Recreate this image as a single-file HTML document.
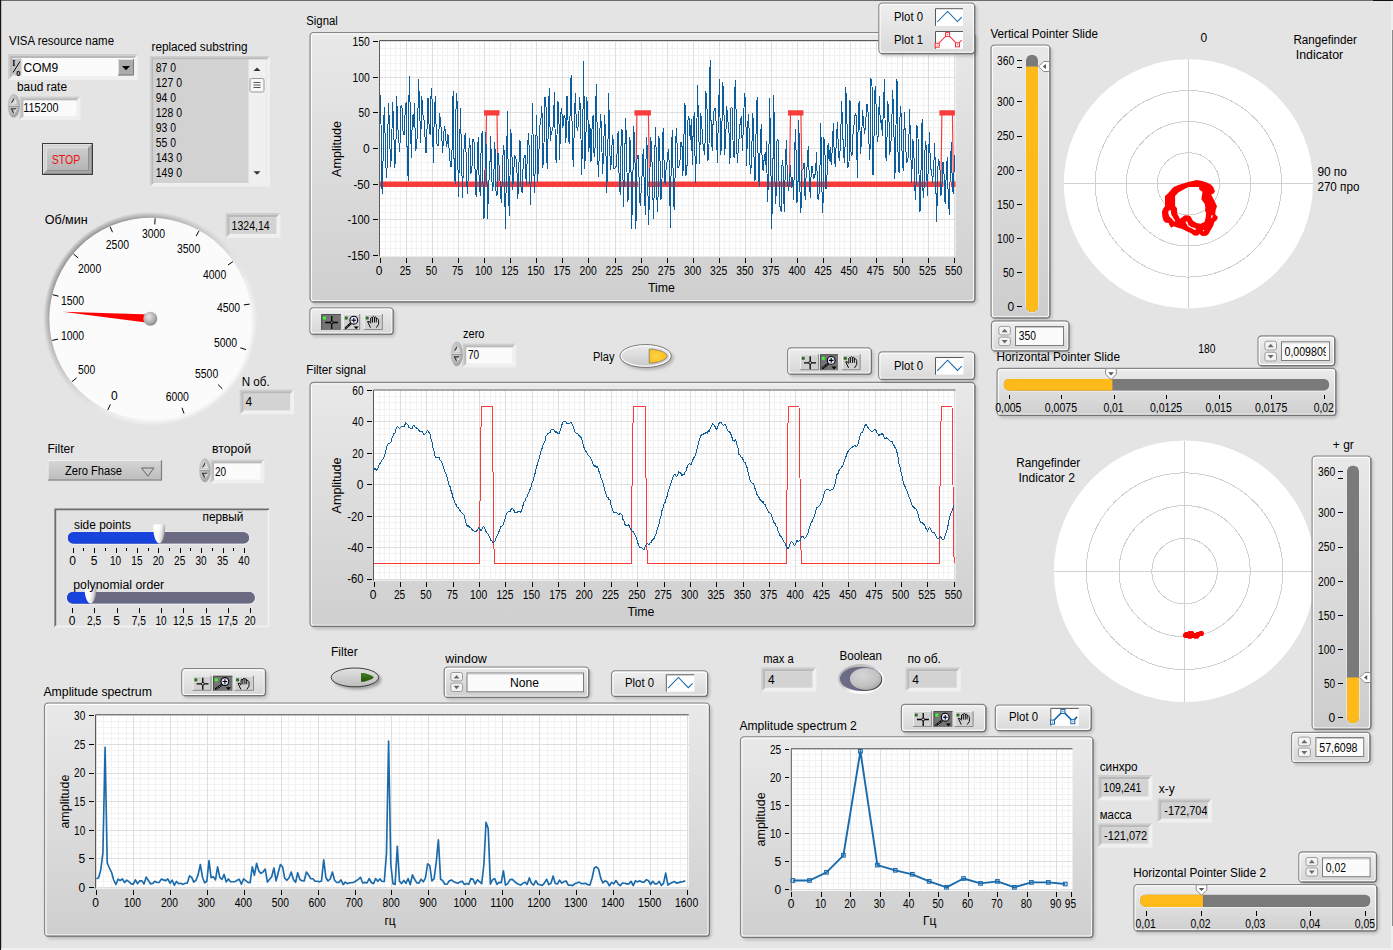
<!DOCTYPE html>
<html><head><meta charset="utf-8"><title>Front Panel</title>
<style>
html,body{margin:0;padding:0;background:#e4e4e4;overflow:hidden}
svg{display:block;font-family:"Liberation Sans",sans-serif;font-size:12px}

</style></head><body>
<svg width="1393" height="950" viewBox="0 0 1393 950">
<defs>
<filter id="blur" x="-5%" y="-5%" width="110%" height="115%"><feGaussianBlur stdDeviation="1.6"/></filter>
<radialGradient id="idc" cx=".38" cy=".36" r=".75"><stop offset="0" stop-color="#d4d4d4"/><stop offset=".55" stop-color="#bcbcbc"/><stop offset=".85" stop-color="#a2a2a2"/><stop offset="1" stop-color="#c8c8c8"/></radialGradient>
<linearGradient id="stopg" x1="0" y1="0" x2="0" y2="1"><stop offset="0" stop-color="#cdcdcd"/><stop offset="1" stop-color="#b4b4b4"/></linearGradient>
<linearGradient id="ringg" x1="0" y1="0" x2="0" y2="1"><stop offset="0" stop-color="#d6d6d6"/><stop offset="1" stop-color="#bcbcbc"/></linearGradient>
<linearGradient id="thumbg" x1="0" y1="0" x2="1" y2=".25"><stop offset="0" stop-color="#ffffff"/><stop offset=".55" stop-color="#fbfbfb"/><stop offset=".8" stop-color="#dcdcdc"/><stop offset="1" stop-color="#9e9e9e"/></linearGradient>
<linearGradient id="gring" x1=".15" y1=".15" x2=".85" y2=".85"><stop offset="0" stop-color="#8c8c8c"/><stop offset=".45" stop-color="#cfcfcf"/><stop offset=".7" stop-color="#f0f0f0"/><stop offset="1" stop-color="#ffffff"/></linearGradient>
<radialGradient id="gfade" cx=".5" cy=".5" r=".5"><stop offset=".935" stop-color="#e4e4e4" stop-opacity="0"/><stop offset=".992" stop-color="#e4e4e4" stop-opacity="1"/></radialGradient>
<radialGradient id="hub" cx=".4" cy=".35" r=".7"><stop offset="0" stop-color="#e6e6e6"/><stop offset=".6" stop-color="#b0b0b0"/><stop offset="1" stop-color="#808080"/></radialGradient>
<radialGradient id="knob" cx=".4" cy=".35" r=".8"><stop offset="0" stop-color="#d6d6d6"/><stop offset=".6" stop-color="#c2c2c2"/><stop offset="1" stop-color="#9a9a9a"/></radialGradient>
<linearGradient id="bring" x1="0" y1="0" x2="1" y2="1"><stop offset="0" stop-color="#a8a8a8"/><stop offset=".45" stop-color="#cfcfcf"/><stop offset=".6" stop-color="#fbfbfb"/><stop offset="1" stop-color="#ffffff"/></linearGradient>
<radialGradient id="yel" cx=".4" cy=".5" r=".6"><stop offset="0" stop-color="#ffd24a"/><stop offset="1" stop-color="#fbbd17"/></radialGradient>
<linearGradient id="grn" x1="0" y1="0" x2="0" y2="1"><stop offset="0" stop-color="#3f7f22"/><stop offset="1" stop-color="#245408"/></linearGradient>
<linearGradient id="playg2" x1="0" y1="0" x2="0" y2="1"><stop offset="0" stop-color="#e2e2e2"/><stop offset="1" stop-color="#bdbdbd"/></linearGradient>
<linearGradient id="playg" x1="0" y1="0" x2="0" y2="1"><stop offset="0" stop-color="#ececec"/><stop offset="1" stop-color="#c9c9c9"/></linearGradient>
<clipPath id="c0"><rect x="67.7" y="532.0" width="181.6" height="11.8" rx="5.9"/></clipPath>
<clipPath id="c1"><rect x="67.0" y="591.8" width="188.0" height="12.0" rx="6.0"/></clipPath>
<linearGradient id="g2" x1="0" y1="0" x2="0" y2="1"><stop offset="0" stop-color="#e9e9e9"/><stop offset="1" stop-color="#cfcfcf"/></linearGradient>
<clipPath id="cs1"><rect x="380" y="41" width="575.5" height="215.5"/></clipPath>
<linearGradient id="g4" x1="0" y1="0" x2="0" y2="1"><stop offset="0" stop-color="#efefef"/><stop offset="1" stop-color="#d9d9d9"/></linearGradient>
<linearGradient id="g5" x1="0" y1="0" x2="0" y2="1"><stop offset="0" stop-color="#ededed"/><stop offset="1" stop-color="#d6d6d6"/></linearGradient>
<linearGradient id="g6" x1="0" y1="0" x2="0" y2="1"><stop offset="0" stop-color="#e9e9e9"/><stop offset="1" stop-color="#cfcfcf"/></linearGradient>
<clipPath id="cs2"><rect x="374" y="390.5" width="581.5" height="190"/></clipPath>
<linearGradient id="g8" x1="0" y1="0" x2="0" y2="1"><stop offset="0" stop-color="#ededed"/><stop offset="1" stop-color="#d6d6d6"/></linearGradient>
<linearGradient id="g9" x1="0" y1="0" x2="0" y2="1"><stop offset="0" stop-color="#efefef"/><stop offset="1" stop-color="#d9d9d9"/></linearGradient>
<linearGradient id="g10" x1="0" y1="0" x2="0" y2="1"><stop offset="0" stop-color="#e8e8e8"/><stop offset="1" stop-color="#cdcdcd"/></linearGradient>
<clipPath id="c11"><rect x="1026.0" y="54.8" width="12.0" height="257.4" rx="6.0"/></clipPath>
<linearGradient id="g12" x1="0" y1="0" x2="0" y2="1"><stop offset="0" stop-color="#efefef"/><stop offset="1" stop-color="#d6d6d6"/></linearGradient>
<linearGradient id="g13" x1="0" y1="0" x2="0" y2="1"><stop offset="0" stop-color="#efefef"/><stop offset="1" stop-color="#d6d6d6"/></linearGradient>
<clipPath id="c14"><rect x="1282.0" y="342.3" width="43.8" height="17.7"/></clipPath>
<linearGradient id="g15" x1="0" y1="0" x2="0" y2="1"><stop offset="0" stop-color="#ececec"/><stop offset="1" stop-color="#cfcfcf"/></linearGradient>
<clipPath id="c16"><rect x="1003.5" y="378.8" width="325.9" height="12.0" rx="6.0"/></clipPath>
<linearGradient id="g17" x1="0" y1="0" x2="0" y2="1"><stop offset="0" stop-color="#e8e8e8"/><stop offset="1" stop-color="#cdcdcd"/></linearGradient>
<clipPath id="c18"><rect x="1347.0" y="465.4" width="12.0" height="258.0" rx="6.0"/></clipPath>
<linearGradient id="g19" x1="0" y1="0" x2="0" y2="1"><stop offset="0" stop-color="#efefef"/><stop offset="1" stop-color="#d6d6d6"/></linearGradient>
<clipPath id="c20"><rect x="1161.3" y="802.0" width="45.8" height="17.2"/></clipPath>
<clipPath id="c21"><rect x="1101.5" y="826.7" width="46.0" height="17.5"/></clipPath>
<linearGradient id="g22" x1="0" y1="0" x2="0" y2="1"><stop offset="0" stop-color="#efefef"/><stop offset="1" stop-color="#d6d6d6"/></linearGradient>
<linearGradient id="g23" x1="0" y1="0" x2="0" y2="1"><stop offset="0" stop-color="#ececec"/><stop offset="1" stop-color="#cfcfcf"/></linearGradient>
<clipPath id="c24"><rect x="1140.0" y="894.5" width="230.6" height="12.5" rx="6.2"/></clipPath>
<linearGradient id="g25" x1="0" y1="0" x2="0" y2="1"><stop offset="0" stop-color="#e9e9e9"/><stop offset="1" stop-color="#cfcfcf"/></linearGradient>
<linearGradient id="g26" x1="0" y1="0" x2="0" y2="1"><stop offset="0" stop-color="#efefef"/><stop offset="1" stop-color="#d9d9d9"/></linearGradient>
<linearGradient id="g27" x1="0" y1="0" x2="0" y2="1"><stop offset="0" stop-color="#ededed"/><stop offset="1" stop-color="#d6d6d6"/></linearGradient>
<linearGradient id="g28" x1="0" y1="0" x2="0" y2="1"><stop offset="0" stop-color="#e9e9e9"/><stop offset="1" stop-color="#cfcfcf"/></linearGradient>
<clipPath id="cs3"><rect x="96" y="715" width="592.8" height="173.6"/></clipPath>
<linearGradient id="g30" x1="0" y1="0" x2="0" y2="1"><stop offset="0" stop-color="#ededed"/><stop offset="1" stop-color="#d6d6d6"/></linearGradient>
<linearGradient id="g31" x1="0" y1="0" x2="0" y2="1"><stop offset="0" stop-color="#efefef"/><stop offset="1" stop-color="#d9d9d9"/></linearGradient>
<linearGradient id="g32" x1="0" y1="0" x2="0" y2="1"><stop offset="0" stop-color="#e9e9e9"/><stop offset="1" stop-color="#cfcfcf"/></linearGradient></defs>
<rect x="0" y="0" width="1393" height="950" fill="#e4e4e4"/>
<text x="9.0" y="45.0" textLength="105.0" lengthAdjust="spacingAndGlyphs">VISA resource name</text>
<rect x="8.0" y="54.0" width="130.0" height="26.0" fill="#f0f0f0"/>
<path d="M8.0 54.0H138.0L134.0 58.0H12.0V76.0L8.0 80.0Z" fill="#cecece"/>
<path d="M10.0 56.0H136.0L134.0 58.0H12.0V76.0L10.0 78.0Z" fill="#b9b9b9"/>
<rect x="12.0" y="58.0" width="122.0" height="18.0" fill="#fbfbfb"/>
<rect x="12" y="58.5" width="9.5" height="17" fill="#c4c4c4"/>
<text x="12.2" y="65.5" font-size="8" font-family="Liberation Serif,serif" font-weight="bold">I</text>
<path d="M13 72.5L20 61.5" stroke="#000" stroke-width="1"/>
<text x="16.3" y="75.5" font-size="7.5" font-weight="bold">0</text>
<text x="23.5" y="72.0">COM9</text>
<rect x="118" y="59" width="16" height="16.5" fill="#ababab"/>
<path d="M118.5 75.5V59.5H134" stroke="#e0e0e0" stroke-width="1" fill="none"/>
<path d="M118 75H133.5V59" stroke="#7b7b7b" stroke-width="1" fill="none"/>
<path d="M122 66h8l-4 4.2z" fill="#000"/>
<text x="17.0" y="91.0" textLength="50.0" lengthAdjust="spacingAndGlyphs">baud rate</text>
<rect x="19.5" y="96.5" width="60.9" height="23.4" fill="#f0f0f0"/>
<path d="M19.5 96.5H80.4L76.4 100.5H23.5V115.9L19.5 119.9Z" fill="#cecece"/>
<path d="M21.5 98.5H78.4L76.4 100.5H23.5V115.9L21.5 117.9Z" fill="#b9b9b9"/>
<rect x="23.5" y="100.5" width="52.9" height="15.4" fill="#fbfbfb"/>
<ellipse cx="13.8" cy="105.8" rx="6.1" ry="11.8" fill="url(#idc)"/>
<path d="M8.8 105.4H18.8" stroke="#e8e8e8" stroke-width=".9"/>
<path d="M8.8 106.3H18.8" stroke="#8a8a8a" stroke-width=".9"/>
<path d="M11.6 103.0L14.0 98.6" stroke="#333" stroke-width="1.1"/>
<path d="M14.4 99.0L16.4 103.0H12.2" fill="none" stroke="#f4f4f4" stroke-width=".9"/>
<path d="M16.2 108.8H11.4L13.6 113.0" fill="none" stroke="#333" stroke-width="1.1"/>
<path d="M14.3 112.8L16.4 109.2" stroke="#f4f4f4" stroke-width=".9"/>
<text x="23.2" y="112.0" textLength="35.2" lengthAdjust="spacingAndGlyphs">115200</text>
<rect x="42" y="143" width="51" height="32" fill="#3c3c3c"/>
<path d="M43 144H92V174H43Z" fill="#8e8e8e"/>
<path d="M43 144H92L88 148H47V170L43 174Z" fill="#e2e2e2"/>
<rect x="47" y="148" width="41" height="22" fill="url(#stopg)"/>
<rect x="45" y="146" width="45" height="26" fill="none" stroke="#c4c4c4" stroke-width="2" opacity=".45"/>
<text x="66.0" y="164.0" text-anchor="middle" textLength="28.5" lengthAdjust="spacingAndGlyphs" fill="#ee1111">STOP</text>
<text x="151.5" y="51.3" textLength="96.0" lengthAdjust="spacingAndGlyphs">replaced substring</text>
<rect x="150.0" y="56.0" width="120.0" height="130.5" fill="#f0f0f0"/>
<path d="M150.0 56.0H270.0L266.5 59.5H153.5V183.0L150.0 186.5Z" fill="#cecece"/>
<path d="M151.8 57.8H268.2L266.5 59.5H153.5V183.0L151.8 184.8Z" fill="#b9b9b9"/>
<rect x="153.5" y="59.5" width="113.0" height="123.5" fill="#d2d2d2"/>
<rect x="248.5" y="59.5" width="18" height="123.5" fill="#f0f0f0"/>
<path d="M253.5 71h7l-3.5 -3.6z" fill="#333"/>
<path d="M253.5 171.2h7l-3.5 3.6z" fill="#333"/>
<rect x="250" y="78.5" width="14" height="13.5" rx="1.5" fill="#f7f7f7" stroke="#9a9a9a" stroke-width="1"/>
<path d="M253.5 82.5h7M253.5 85h7M253.5 87.5h7" stroke="#555" stroke-width="1"/>
<text x="155.8" y="72.0" textLength="20.2" lengthAdjust="spacingAndGlyphs">87 0</text>
<text x="155.8" y="87.0" textLength="26.2" lengthAdjust="spacingAndGlyphs">127 0</text>
<text x="155.8" y="102.0" textLength="20.2" lengthAdjust="spacingAndGlyphs">94 0</text>
<text x="155.8" y="117.0" textLength="26.2" lengthAdjust="spacingAndGlyphs">128 0</text>
<text x="155.8" y="132.0" textLength="20.2" lengthAdjust="spacingAndGlyphs">93 0</text>
<text x="155.8" y="147.0" textLength="20.2" lengthAdjust="spacingAndGlyphs">55 0</text>
<text x="155.8" y="162.0" textLength="26.2" lengthAdjust="spacingAndGlyphs">143 0</text>
<text x="155.8" y="177.0" textLength="26.2" lengthAdjust="spacingAndGlyphs">149 0</text>
<text x="44.7" y="224.0" textLength="43.0" lengthAdjust="spacingAndGlyphs">Об/мин</text>
<circle cx="150.3" cy="318.8" r="107" fill="url(#gring)"/>
<circle cx="150.3" cy="318.8" r="108" fill="url(#gfade)"/>
<circle cx="150.3" cy="318.8" r="101" fill="#fbfbfb"/>
<path d="M107.8 409.9L110.4 404.4M71.9 381.7L76.6 377.9M52.2 340.4L58.0 339.1M52.7 294.7L58.5 296.2M73.5 254.0L78.1 257.9M110.1 226.7L112.5 232.2M155.1 218.4L154.8 224.4M199.0 230.9L196.1 236.1M232.9 261.6L228.0 265.0M249.7 304.1L243.8 304.9M246.0 349.6L240.3 347.8M222.4 388.8L218.1 384.6M184.0 413.5L182.0 407.8" stroke="#000" stroke-width="1"/>
<text x="114.4" y="400.2" text-anchor="middle">0</text>
<text x="86.6" y="374.2" text-anchor="middle" textLength="17.2" lengthAdjust="spacingAndGlyphs">500</text>
<text x="72.5" y="340.1" text-anchor="middle" textLength="23.2" lengthAdjust="spacingAndGlyphs">1000</text>
<text x="72.5" y="305.0" text-anchor="middle" textLength="23.2" lengthAdjust="spacingAndGlyphs">1500</text>
<text x="89.6" y="273.4" text-anchor="middle" textLength="23.2" lengthAdjust="spacingAndGlyphs">2000</text>
<text x="117.4" y="249.2" text-anchor="middle" textLength="23.2" lengthAdjust="spacingAndGlyphs">2500</text>
<text x="153.5" y="238.1" text-anchor="middle" textLength="23.2" lengthAdjust="spacingAndGlyphs">3000</text>
<text x="188.6" y="253.2" text-anchor="middle" textLength="23.2" lengthAdjust="spacingAndGlyphs">3500</text>
<text x="214.6" y="279.0" text-anchor="middle" textLength="23.2" lengthAdjust="spacingAndGlyphs">4000</text>
<text x="228.5" y="311.8" text-anchor="middle" textLength="23.2" lengthAdjust="spacingAndGlyphs">4500</text>
<text x="225.5" y="347.2" text-anchor="middle" textLength="23.2" lengthAdjust="spacingAndGlyphs">5000</text>
<text x="206.6" y="378.0" text-anchor="middle" textLength="23.2" lengthAdjust="spacingAndGlyphs">5500</text>
<text x="177.3" y="401.0" text-anchor="middle" textLength="23.2" lengthAdjust="spacingAndGlyphs">6000</text>
<path d="M62.6 311.7L150.6 314.6L150.0 323.0Z" fill="#ff0000"/>
<circle cx="150.3" cy="318.8" r="7" fill="url(#hub)"/>
<rect x="225.6" y="213.1" width="54.8" height="24.8" fill="#f0f0f0"/>
<path d="M225.6 213.1H280.4L276.4 217.1H229.6V233.9L225.6 237.9Z" fill="#cecece"/>
<path d="M227.6 215.1H278.4L276.4 217.1H229.6V233.9L227.6 235.9Z" fill="#b9b9b9"/>
<rect x="229.6" y="217.1" width="46.8" height="16.8" fill="#d3d3d3"/>
<text x="231.5" y="229.6" textLength="38.2" lengthAdjust="spacingAndGlyphs">1324,14</text>
<text x="241.7" y="385.7" textLength="28.0" lengthAdjust="spacingAndGlyphs">N об.</text>
<rect x="239.6" y="389.6" width="54.5" height="24.8" fill="#f0f0f0"/>
<path d="M239.6 389.6H294.1L290.1 393.6H243.6V410.4L239.6 414.4Z" fill="#cecece"/>
<path d="M241.6 391.6H292.1L290.1 393.6H243.6V410.4L241.6 412.4Z" fill="#b9b9b9"/>
<rect x="243.6" y="393.6" width="46.5" height="16.8" fill="#d3d3d3"/>
<text x="245.5" y="406.4">4</text>
<text x="47.5" y="452.8">Filter</text>
<rect x="47.5" y="459.8" width="114.5" height="20.8" fill="url(#ringg)"/>
<path d="M48 480.5V460.3H162" stroke="#f0f0f0" stroke-width="1.2" fill="none"/>
<path d="M48 480H161.5V460.3" stroke="#7e7e7e" stroke-width="1.2" fill="none"/>
<text x="93.5" y="474.8" text-anchor="middle" textLength="57.0" lengthAdjust="spacingAndGlyphs">Zero Fhase</text>
<path d="M141.5 468h12.5l-6.2 8.2z" fill="none" stroke="#666" stroke-width="1"/>
<text x="212.0" y="452.8" textLength="39.0" lengthAdjust="spacingAndGlyphs">второй</text>
<rect x="210.2" y="459.5" width="54.2" height="24.0" fill="#f0f0f0"/>
<path d="M210.2 459.5H264.4L260.4 463.5H214.2V479.5L210.2 483.5Z" fill="#cecece"/>
<path d="M212.2 461.5H262.4L260.4 463.5H214.2V479.5L212.2 481.5Z" fill="#b9b9b9"/>
<rect x="214.2" y="463.5" width="46.2" height="16.0" fill="#fbfbfb"/>
<ellipse cx="204.9" cy="470.2" rx="5.7" ry="12.0" fill="url(#idc)"/>
<path d="M200.3 469.8H209.5" stroke="#e8e8e8" stroke-width=".9"/>
<path d="M200.3 470.7H209.5" stroke="#8a8a8a" stroke-width=".9"/>
<path d="M202.7 467.4L205.1 463.0" stroke="#333" stroke-width="1.1"/>
<path d="M205.5 463.4L207.5 467.4H203.3" fill="none" stroke="#f4f4f4" stroke-width=".9"/>
<path d="M207.3 473.2H202.5L204.7 477.4" fill="none" stroke="#333" stroke-width="1.1"/>
<path d="M205.4 477.2L207.5 473.6" stroke="#f4f4f4" stroke-width=".9"/>
<text x="215.0" y="475.6" textLength="11.2" lengthAdjust="spacingAndGlyphs">20</text>
<rect x="54.5" y="508.5" width="214.5" height="118.5" fill="#e2e2e2"/>
<path d="M55.3 627V509.3H269" stroke="#6e6e6e" stroke-width="1.8" fill="none"/>
<path d="M55 626.5H268.5V510" stroke="#f3f3f3" stroke-width="1.4" fill="none"/>
<text x="202.5" y="520.5" textLength="41.0" lengthAdjust="spacingAndGlyphs">первый</text>
<rect x="67.1" y="531.6" width="183.0" height="13.2" rx="6.6" fill="#f0f0f4"/>
<g clip-path="url(#c0)"><rect x="67.7" y="532.0" width="181.6" height="11.8" fill="#6a6a82"/><rect x="67.7" y="532.0" width="91.5" height="11.8" fill="#1843dc"/></g>
<path d="M153.2 526.3Q153.2 524.3 155.2 524.3H163.2Q165.2 524.3 165.2 526.3C165.2 536.4 162.4 543.4 159.2 543.4C156.0 543.4 153.2 536.4 153.2 526.3Z" fill="url(#thumbg)"/>
<text x="74.0" y="528.5" textLength="57.0" lengthAdjust="spacingAndGlyphs">side points</text>
<path d="M73.2 548V553.3M83.9 548V551.0M94.6 548V553.3M105.3 548V551.0M116.0 548V553.3M126.7 548V551.0M137.4 548V553.3M148.1 548V551.0M158.8 548V553.3M169.5 548V551.0M180.2 548V553.3M190.9 548V551.0M201.6 548V553.3M212.3 548V551.0M223.0 548V553.3M233.7 548V551.0M244.4 548V553.3" stroke="#000" stroke-width="1" shape-rendering="crispEdges"/>
<text x="72.7" y="564.8" text-anchor="middle">0</text>
<text x="94.1" y="564.8" text-anchor="middle">5</text>
<text x="115.5" y="564.8" text-anchor="middle" textLength="11.2" lengthAdjust="spacingAndGlyphs">10</text>
<text x="136.9" y="564.8" text-anchor="middle" textLength="11.2" lengthAdjust="spacingAndGlyphs">15</text>
<text x="158.3" y="564.8" text-anchor="middle" textLength="11.2" lengthAdjust="spacingAndGlyphs">20</text>
<text x="179.7" y="564.8" text-anchor="middle" textLength="11.2" lengthAdjust="spacingAndGlyphs">25</text>
<text x="201.1" y="564.8" text-anchor="middle" textLength="11.2" lengthAdjust="spacingAndGlyphs">30</text>
<text x="222.5" y="564.8" text-anchor="middle" textLength="11.2" lengthAdjust="spacingAndGlyphs">35</text>
<text x="243.9" y="564.8" text-anchor="middle" textLength="11.2" lengthAdjust="spacingAndGlyphs">40</text>
<rect x="66.4" y="591.4" width="189.4" height="13.4" rx="6.7" fill="#f0f0f4"/>
<g clip-path="url(#c1)"><rect x="67.0" y="591.8" width="188.0" height="12.0" fill="#6a6a82"/><rect x="67.0" y="591.8" width="23.5" height="12.0" fill="#1843dc"/></g>
<path d="M84.5 587.4Q84.5 585.4 86.5 585.4H94.5Q96.5 585.4 96.5 587.4C96.5 596.4 93.7 603.4 90.5 603.4C87.3 603.4 84.5 596.4 84.5 587.4Z" fill="url(#thumbg)"/>
<text x="73.2" y="588.9" textLength="91.0" lengthAdjust="spacingAndGlyphs">polynomial order</text>
<path d="M72.5 608V613.3M94.8 608V613.3M117.0 608V613.3M139.2 608V613.3M161.5 608V613.3M183.8 608V613.3M206.0 608V613.3M228.2 608V613.3M250.5 608V613.3" stroke="#000" stroke-width="1" shape-rendering="crispEdges"/>
<text x="72.0" y="624.8" text-anchor="middle">0</text>
<text x="94.2" y="624.8" text-anchor="middle" textLength="14.2" lengthAdjust="spacingAndGlyphs">2,5</text>
<text x="116.5" y="624.8" text-anchor="middle">5</text>
<text x="138.8" y="624.8" text-anchor="middle" textLength="14.2" lengthAdjust="spacingAndGlyphs">7,5</text>
<text x="161.0" y="624.8" text-anchor="middle" textLength="11.2" lengthAdjust="spacingAndGlyphs">10</text>
<text x="183.2" y="624.8" text-anchor="middle" textLength="20.2" lengthAdjust="spacingAndGlyphs">12,5</text>
<text x="205.5" y="624.8" text-anchor="middle" textLength="11.2" lengthAdjust="spacingAndGlyphs">15</text>
<text x="227.8" y="624.8" text-anchor="middle" textLength="20.2" lengthAdjust="spacingAndGlyphs">17,5</text>
<text x="250.0" y="624.8" text-anchor="middle" textLength="11.2" lengthAdjust="spacingAndGlyphs">20</text>
<text x="306.3" y="24.5" textLength="31.5" lengthAdjust="spacingAndGlyphs">Signal</text>
<rect x="311.7" y="34.4" width="665.6" height="270.3" rx="4.5" fill="#000" opacity=".16" filter="url(#blur)"/>
<rect x="310.1" y="32.6" width="664.7" height="269.2" rx="3.5" fill="url(#g2)" stroke="#868686" stroke-width="1.3"/>
<rect x="311.4" y="33.9" width="662.3" height="266.8" rx="2.3" fill="none" stroke="#fff" stroke-width="1.1" opacity=".92"/>
<path d="M312.5 301.9H971.9Q974.9 301.9 974.9 298.9V35.0" fill="none" stroke="#6c6c6c" stroke-width="1.2" opacity=".75"/>
<rect x="379.0" y="40.0" width="576.5" height="216.5" fill="#fff"/>
<path d="M385.2 40.0V256.5M390.4 40.0V256.5M395.7 40.0V256.5M400.9 40.0V256.5M406.1 40.0V256.5M411.3 40.0V256.5M416.6 40.0V256.5M421.8 40.0V256.5M427.0 40.0V256.5M432.2 40.0V256.5M437.4 40.0V256.5M442.7 40.0V256.5M447.9 40.0V256.5M453.1 40.0V256.5M458.3 40.0V256.5M463.6 40.0V256.5M468.8 40.0V256.5M474.0 40.0V256.5M479.2 40.0V256.5M484.4 40.0V256.5M489.7 40.0V256.5M494.9 40.0V256.5M500.1 40.0V256.5M505.3 40.0V256.5M510.6 40.0V256.5M515.8 40.0V256.5M521.0 40.0V256.5M526.2 40.0V256.5M531.5 40.0V256.5M536.7 40.0V256.5M541.9 40.0V256.5M547.1 40.0V256.5M552.3 40.0V256.5M557.6 40.0V256.5M562.8 40.0V256.5M568.0 40.0V256.5M573.2 40.0V256.5M578.5 40.0V256.5M583.7 40.0V256.5M588.9 40.0V256.5M594.1 40.0V256.5M599.3 40.0V256.5M604.6 40.0V256.5M609.8 40.0V256.5M615.0 40.0V256.5M620.2 40.0V256.5M625.5 40.0V256.5M630.7 40.0V256.5M635.9 40.0V256.5M641.1 40.0V256.5M646.3 40.0V256.5M651.6 40.0V256.5M656.8 40.0V256.5M662.0 40.0V256.5M667.2 40.0V256.5M672.5 40.0V256.5M677.7 40.0V256.5M682.9 40.0V256.5M688.1 40.0V256.5M693.4 40.0V256.5M698.6 40.0V256.5M703.8 40.0V256.5M709.0 40.0V256.5M714.2 40.0V256.5M719.5 40.0V256.5M724.7 40.0V256.5M729.9 40.0V256.5M735.1 40.0V256.5M740.4 40.0V256.5M745.6 40.0V256.5M750.8 40.0V256.5M756.0 40.0V256.5M761.2 40.0V256.5M766.5 40.0V256.5M771.7 40.0V256.5M776.9 40.0V256.5M782.1 40.0V256.5M787.4 40.0V256.5M792.6 40.0V256.5M797.8 40.0V256.5M803.0 40.0V256.5M808.2 40.0V256.5M813.5 40.0V256.5M818.7 40.0V256.5M823.9 40.0V256.5M829.1 40.0V256.5M834.4 40.0V256.5M839.6 40.0V256.5M844.8 40.0V256.5M850.0 40.0V256.5M855.2 40.0V256.5M860.5 40.0V256.5M865.7 40.0V256.5M870.9 40.0V256.5M876.1 40.0V256.5M881.4 40.0V256.5M886.6 40.0V256.5M891.8 40.0V256.5M897.0 40.0V256.5M902.2 40.0V256.5M907.5 40.0V256.5M912.7 40.0V256.5M917.9 40.0V256.5M923.1 40.0V256.5M928.4 40.0V256.5M933.6 40.0V256.5M938.8 40.0V256.5M944.0 40.0V256.5M949.3 40.0V256.5M954.5 40.0V256.5M379.0 248.5H955.5M379.0 241.3H955.5M379.0 234.2H955.5M379.0 227.1H955.5M379.0 219.9H955.5M379.0 212.8H955.5M379.0 205.7H955.5M379.0 198.5H955.5M379.0 191.4H955.5M379.0 184.3H955.5M379.0 177.1H955.5M379.0 170.0H955.5M379.0 162.9H955.5M379.0 155.7H955.5M379.0 148.6H955.5M379.0 141.5H955.5M379.0 134.3H955.5M379.0 127.2H955.5M379.0 120.1H955.5M379.0 112.9H955.5M379.0 105.8H955.5M379.0 98.7H955.5M379.0 91.5H955.5M379.0 84.4H955.5M379.0 77.3H955.5M379.0 70.1H955.5M379.0 63.0H955.5M379.0 55.9H955.5M379.0 48.7H955.5M379.0 41.6H955.5" stroke="#f2f2f2" stroke-width="1" fill="none" shape-rendering="crispEdges"/>
<path d="M406.1 40.0V256.5M432.2 40.0V256.5M458.3 40.0V256.5M484.4 40.0V256.5M510.6 40.0V256.5M536.7 40.0V256.5M562.8 40.0V256.5M588.9 40.0V256.5M615.0 40.0V256.5M641.1 40.0V256.5M667.2 40.0V256.5M693.4 40.0V256.5M719.5 40.0V256.5M745.6 40.0V256.5M771.7 40.0V256.5M797.8 40.0V256.5M823.9 40.0V256.5M850.0 40.0V256.5M876.1 40.0V256.5M902.2 40.0V256.5M928.4 40.0V256.5M954.5 40.0V256.5M379.0 41.6H955.5M379.0 77.3H955.5M379.0 112.9H955.5M379.0 148.6H955.5M379.0 184.3H955.5M379.0 219.9H955.5" stroke="#dedede" stroke-width="1" fill="none" shape-rendering="crispEdges"/>
<path d="M379.5 256.5V40.5H955.5" stroke="#5a5a5a" stroke-width="1" fill="none"/>
<path d="M373.2 41.6H377.8M373.2 77.3H377.8M373.2 112.9H377.8M373.2 148.6H377.8M373.2 184.3H377.8M373.2 219.9H377.8M373.2 255.6H377.8M380.0 258.0V262.6M406.1 258.0V262.6M432.2 258.0V262.6M458.3 258.0V262.6M484.4 258.0V262.6M510.6 258.0V262.6M536.7 258.0V262.6M562.8 258.0V262.6M588.9 258.0V262.6M615.0 258.0V262.6M641.1 258.0V262.6M667.2 258.0V262.6M693.4 258.0V262.6M719.5 258.0V262.6M745.6 258.0V262.6M771.7 258.0V262.6M797.8 258.0V262.6M823.9 258.0V262.6M850.0 258.0V262.6M876.1 258.0V262.6M902.2 258.0V262.6M928.4 258.0V262.6M954.5 258.0V262.6" stroke="#000" stroke-width="1" fill="none" shape-rendering="crispEdges"/>
<text x="369.8" y="46.0" text-anchor="end" textLength="17.2" lengthAdjust="spacingAndGlyphs">150</text>
<text x="369.8" y="81.7" text-anchor="end" textLength="17.2" lengthAdjust="spacingAndGlyphs">100</text>
<text x="369.8" y="117.3" text-anchor="end" textLength="11.2" lengthAdjust="spacingAndGlyphs">50</text>
<text x="369.8" y="153.0" text-anchor="end">0</text>
<text x="369.8" y="188.7" text-anchor="end" textLength="16.2" lengthAdjust="spacingAndGlyphs">-50</text>
<text x="369.8" y="224.3" text-anchor="end" textLength="22.2" lengthAdjust="spacingAndGlyphs">-100</text>
<text x="369.8" y="260.0" text-anchor="end" textLength="22.2" lengthAdjust="spacingAndGlyphs">-150</text>
<text x="379.2" y="275.0" text-anchor="middle">0</text>
<text x="405.3" y="275.0" text-anchor="middle" textLength="11.2" lengthAdjust="spacingAndGlyphs">25</text>
<text x="431.4" y="275.0" text-anchor="middle" textLength="11.2" lengthAdjust="spacingAndGlyphs">50</text>
<text x="457.5" y="275.0" text-anchor="middle" textLength="11.2" lengthAdjust="spacingAndGlyphs">75</text>
<text x="483.6" y="275.0" text-anchor="middle" textLength="17.2" lengthAdjust="spacingAndGlyphs">100</text>
<text x="509.8" y="275.0" text-anchor="middle" textLength="17.2" lengthAdjust="spacingAndGlyphs">125</text>
<text x="535.9" y="275.0" text-anchor="middle" textLength="17.2" lengthAdjust="spacingAndGlyphs">150</text>
<text x="562.0" y="275.0" text-anchor="middle" textLength="17.2" lengthAdjust="spacingAndGlyphs">175</text>
<text x="588.1" y="275.0" text-anchor="middle" textLength="17.2" lengthAdjust="spacingAndGlyphs">200</text>
<text x="614.2" y="275.0" text-anchor="middle" textLength="17.2" lengthAdjust="spacingAndGlyphs">225</text>
<text x="640.3" y="275.0" text-anchor="middle" textLength="17.2" lengthAdjust="spacingAndGlyphs">250</text>
<text x="666.4" y="275.0" text-anchor="middle" textLength="17.2" lengthAdjust="spacingAndGlyphs">275</text>
<text x="692.6" y="275.0" text-anchor="middle" textLength="17.2" lengthAdjust="spacingAndGlyphs">300</text>
<text x="718.7" y="275.0" text-anchor="middle" textLength="17.2" lengthAdjust="spacingAndGlyphs">325</text>
<text x="744.8" y="275.0" text-anchor="middle" textLength="17.2" lengthAdjust="spacingAndGlyphs">350</text>
<text x="770.9" y="275.0" text-anchor="middle" textLength="17.2" lengthAdjust="spacingAndGlyphs">375</text>
<text x="797.0" y="275.0" text-anchor="middle" textLength="17.2" lengthAdjust="spacingAndGlyphs">400</text>
<text x="823.1" y="275.0" text-anchor="middle" textLength="17.2" lengthAdjust="spacingAndGlyphs">425</text>
<text x="849.2" y="275.0" text-anchor="middle" textLength="17.2" lengthAdjust="spacingAndGlyphs">450</text>
<text x="875.3" y="275.0" text-anchor="middle" textLength="17.2" lengthAdjust="spacingAndGlyphs">475</text>
<text x="901.5" y="275.0" text-anchor="middle" textLength="17.2" lengthAdjust="spacingAndGlyphs">500</text>
<text x="927.6" y="275.0" text-anchor="middle" textLength="17.2" lengthAdjust="spacingAndGlyphs">525</text>
<text x="953.7" y="275.0" text-anchor="middle" textLength="17.2" lengthAdjust="spacingAndGlyphs">550</text>
<text transform="translate(340.9 149.0) rotate(-90)" text-anchor="middle" textLength="56.0" lengthAdjust="spacingAndGlyphs">Amplitude</text>
<text x="661.5" y="292.0" text-anchor="middle" textLength="27.0" lengthAdjust="spacingAndGlyphs">Time</text>
<g clip-path="url(#cs1)">
<path d="M377.5 184.3H488.0" stroke="#f83c3c" stroke-width="5.4"/>
<path d="M484.0 112.9H499.5" stroke="#f83c3c" stroke-width="5.4"/>
<path d="M495.5 184.3H638.4" stroke="#f83c3c" stroke-width="5.4"/>
<path d="M634.4 112.9H650.9" stroke="#f83c3c" stroke-width="5.4"/>
<path d="M647.0 184.3H791.9" stroke="#f83c3c" stroke-width="5.4"/>
<path d="M788.0 112.9H803.4" stroke="#f83c3c" stroke-width="5.4"/>
<path d="M799.5 184.3H943.4" stroke="#f83c3c" stroke-width="5.4"/>
<path d="M939.4 112.9H954.9" stroke="#f83c3c" stroke-width="5.4"/>
<path d="M950.9 184.3H957.0" stroke="#f83c3c" stroke-width="5.4"/>
<path d="M485.5 184.3L486.5 112.9M497.0 112.9L498.0 184.3M635.9 184.3L636.9 112.9M648.4 112.9L649.5 184.3M789.4 184.3L790.5 112.9M800.9 112.9L802.0 184.3M940.9 184.3L941.9 112.9M952.4 112.9L953.4 184.3" stroke="#f83c3c" stroke-width="1.2" fill="none"/>
<polyline points="380.0,94.1 381.0,123.6 382.1,193.8 383.1,157.7 384.2,107.4 385.2,139.1 386.3,177.8 387.3,164.4 388.4,103.3 389.4,121.5 390.4,166.4 391.5,156.1 392.5,102.1 393.6,120.2 394.6,168.0 395.7,158.3 396.7,96.9 397.8,127.2 398.8,140.0 399.8,151.7 400.9,105.9 401.9,105.5 403.0,130.8 404.0,135.2 405.1,113.2 406.1,102.0 407.2,155.1 408.2,180.9 409.2,76.0 410.3,111.1 411.3,157.3 412.4,115.1 413.4,127.0 414.5,104.0 415.5,150.4 416.6,147.1 417.6,128.2 418.6,79.0 419.7,111.4 420.7,142.4 421.8,96.4 422.8,114.1 423.9,117.9 424.9,135.4 426.0,153.0 427.0,129.5 428.0,97.9 429.1,125.9 430.1,134.9 431.2,88.2 432.2,100.9 433.3,162.4 434.3,112.6 435.4,96.6 436.4,141.6 437.4,145.7 438.5,144.9 439.5,114.0 440.6,121.6 441.6,134.2 442.7,152.2 443.7,132.9 444.8,126.7 445.8,139.9 446.8,146.7 447.9,133.9 448.9,146.0 450.0,160.8 451.0,167.3 452.1,148.8 453.1,91.5 454.2,171.3 455.2,183.5 456.2,93.2 457.3,104.1 458.3,196.8 459.4,159.7 460.4,108.9 461.5,153.2 462.5,197.6 463.6,157.4 464.6,136.8 465.6,133.2 466.7,183.2 467.7,193.5 468.8,149.9 469.8,138.7 470.9,173.3 471.9,168.7 473.0,139.2 474.0,141.8 475.0,169.1 476.1,196.6 477.1,167.3 478.2,137.6 479.2,183.2 480.3,195.6 481.3,136.1 482.4,131.3 483.4,218.5 484.4,216.8 485.5,133.0 486.5,153.6 487.6,218.3 488.6,184.7 489.7,173.1 490.7,136.5 491.8,180.1 492.8,190.5 493.9,172.6 494.9,142.8 495.9,190.8 497.0,196.3 498.0,152.7 499.1,166.4 500.1,182.3 501.2,202.3 502.2,182.5 503.3,145.2 504.3,151.6 505.3,228.5 506.4,174.2 507.4,111.7 508.5,195.7 509.5,215.4 510.6,129.9 511.6,138.4 512.7,189.1 513.7,171.8 514.7,155.3 515.8,157.0 516.8,167.2 517.9,198.4 518.9,164.3 520.0,140.3 521.0,187.4 522.1,192.7 523.1,167.2 524.1,156.6 525.2,155.4 526.2,184.5 527.3,156.6 528.3,133.7 529.4,150.5 530.4,204.6 531.5,165.7 532.5,103.8 533.5,161.6 534.6,193.0 535.6,146.1 536.7,115.1 537.7,181.2 538.8,155.2 539.8,126.5 540.9,119.3 541.9,106.2 542.9,167.6 544.0,143.5 545.0,97.2 546.1,107.5 547.1,168.9 548.2,132.9 549.2,88.4 550.3,140.8 551.3,133.1 552.3,129.7 553.4,125.3 554.4,92.2 555.5,157.6 556.5,162.9 557.6,101.9 558.6,102.7 559.7,159.1 560.7,113.6 561.7,108.3 562.8,127.9 563.8,116.5 564.9,115.1 565.9,142.2 567.0,95.9 568.0,120.2 569.1,144.1 570.1,113.1 571.1,75.0 572.2,129.7 573.2,166.5 574.3,127.9 575.3,93.1 576.4,124.6 577.4,130.6 578.5,124.2 579.5,97.1 580.5,108.1 581.6,175.0 582.6,137.8 583.7,61.6 584.7,169.0 585.8,141.7 586.8,97.3 587.9,115.9 588.9,151.7 589.9,124.4 591.0,161.6 592.0,129.0 593.1,115.2 594.1,156.8 595.2,146.6 596.2,84.7 597.3,135.5 598.3,176.7 599.3,154.7 600.4,114.1 601.4,125.7 602.5,173.7 603.5,154.4 604.6,115.8 605.6,134.6 606.7,192.9 607.7,159.9 608.7,93.6 609.8,152.5 610.8,169.4 611.9,146.7 612.9,135.1 614.0,168.8 615.0,168.4 616.1,166.2 617.1,152.9 618.1,131.1 619.2,181.4 620.2,194.9 621.3,129.4 622.3,130.8 623.4,206.4 624.4,175.2 625.5,118.7 626.5,140.8 627.5,201.4 628.6,198.3 629.6,137.4 630.7,145.2 631.7,228.5 632.8,181.7 633.8,126.2 634.9,154.0 635.9,228.5 636.9,159.5 638.0,154.8 639.0,177.1 640.1,205.3 641.1,192.1 642.2,172.8 643.2,149.2 644.3,186.7 645.3,214.3 646.3,137.0 647.4,149.6 648.4,224.2 649.5,199.7 650.5,137.9 651.6,144.0 652.6,188.1 653.7,218.6 654.7,152.6 655.7,127.2 656.8,197.3 657.8,211.6 658.9,135.9 659.9,156.1 661.0,199.7 662.0,179.3 663.1,128.0 664.1,162.6 665.1,184.6 666.2,167.2 667.2,160.8 668.3,149.6 669.3,164.8 670.4,227.9 671.4,145.3 672.5,130.5 673.5,203.3 674.5,209.7 675.6,142.1 676.6,128.1 677.7,167.2 678.7,167.1 679.8,164.3 680.8,142.8 681.9,142.5 682.9,175.2 683.9,137.7 685.0,103.4 686.0,175.6 687.1,164.6 688.1,116.3 689.2,118.0 690.2,140.1 691.3,119.5 692.3,164.2 693.4,121.9 694.4,112.6 695.4,182.1 696.5,150.8 697.5,85.6 698.6,126.6 699.6,164.0 700.7,113.4 701.7,123.1 702.8,142.6 703.8,150.1 704.8,154.5 705.9,91.8 706.9,103.1 708.0,160.7 709.0,144.8 710.1,60.5 711.1,126.2 712.2,150.6 713.2,118.5 714.2,109.4 715.3,108.5 716.3,126.7 717.4,162.1 718.4,113.8 719.5,79.3 720.5,154.1 721.6,148.4 722.6,82.8 723.6,91.2 724.7,154.1 725.7,137.9 726.8,106.9 727.8,119.8 728.9,129.4 729.9,163.8 731.0,107.8 732.0,107.5 733.0,140.4 734.1,158.1 735.1,80.4 736.2,114.3 737.2,162.8 738.3,149.4 739.3,134.4 740.4,119.1 741.4,116.7 742.4,150.8 743.5,122.2 744.5,94.0 745.6,99.8 746.6,165.3 747.7,123.2 748.7,114.7 749.8,162.3 750.8,173.9 751.8,146.9 752.9,113.1 753.9,154.6 755.0,181.4 756.0,134.4 757.1,97.0 758.1,157.7 759.2,186.4 760.2,145.0 761.2,124.9 762.3,166.5 763.3,171.0 764.4,154.0 765.4,164.4 766.5,141.7 767.5,201.9 768.6,176.5 769.6,98.3 770.6,145.2 771.7,228.5 772.7,183.8 773.8,95.5 774.8,177.4 775.9,203.7 776.9,140.9 778.0,138.9 779.0,180.7 780.0,206.5 781.1,211.3 782.1,160.6 783.2,166.9 784.2,211.4 785.3,169.4 786.3,140.4 787.4,179.0 788.4,190.9 789.4,182.1 790.5,165.5 791.5,187.4 792.6,177.2 793.6,199.7 794.7,147.6 795.7,129.4 796.8,203.1 797.8,198.5 798.8,120.5 799.9,189.2 800.9,212.7 802.0,169.8 803.0,169.2 804.1,162.9 805.1,199.6 806.2,174.2 807.2,165.4 808.2,146.8 809.3,178.6 810.3,197.3 811.4,166.6 812.4,166.7 813.5,178.8 814.5,177.4 815.6,171.3 816.6,152.6 817.6,198.0 818.7,199.9 819.7,181.6 820.8,123.8 821.8,187.5 822.9,212.5 823.9,137.4 825.0,154.6 826.0,189.1 827.0,175.2 828.1,142.8 829.1,160.5 830.2,147.4 831.2,165.1 832.3,148.8 833.3,123.9 834.4,159.3 835.4,166.4 836.4,136.6 837.5,122.4 838.5,154.9 839.6,160.7 840.6,137.6 841.7,101.7 842.7,132.5 843.8,156.6 844.8,162.8 845.8,87.1 846.9,118.5 847.9,167.9 849.0,162.9 850.0,100.0 851.1,156.1 852.1,155.2 853.2,129.5 854.2,123.9 855.2,113.7 856.3,116.0 857.3,177.6 858.4,107.1 859.4,101.3 860.5,153.7 861.5,140.8 862.6,110.3 863.6,124.6 864.6,133.7 865.7,122.6 866.7,104.4 867.8,104.2 868.8,140.2 869.9,159.2 870.9,78.3 872.0,85.5 873.0,175.3 874.0,136.9 875.1,86.7 876.1,105.7 877.2,141.3 878.2,136.0 879.3,96.6 880.3,123.0 881.4,120.9 882.4,135.5 883.4,108.6 884.5,79.6 885.5,155.5 886.6,160.7 887.6,101.9 888.7,106.3 889.7,154.9 890.8,146.0 891.8,120.3 892.8,90.6 893.9,131.7 894.9,178.4 896.0,125.5 897.0,79.1 898.1,158.7 899.1,173.2 900.2,106.3 901.2,114.8 902.2,158.9 903.3,170.7 904.3,112.6 905.4,135.9 906.4,162.7 907.5,160.8 908.5,154.8 909.6,109.9 910.6,146.7 911.7,182.7 912.7,139.8 913.7,145.1 914.8,188.9 915.8,199.2 916.9,125.2 917.9,134.2 919.0,174.4 920.0,211.7 921.1,166.3 922.1,119.6 923.1,197.8 924.2,186.6 925.2,141.7 926.3,146.2 927.3,195.5 928.4,162.5 929.4,132.5 930.5,169.0 931.5,169.9 932.5,182.3 933.6,171.9 934.6,143.5 935.7,180.5 936.7,221.7 937.8,167.8 938.8,159.8 939.9,166.3 940.9,196.1 941.9,187.0 943.0,162.1 944.0,174.1 945.1,203.7 946.1,177.8 947.2,157.9 948.2,195.6 949.3,214.1 950.3,169.5 951.3,142.9 952.4,189.0 953.4,193.5 954.5,155.1" fill="none" stroke="#0d5c9c" stroke-width="1" stroke-linejoin="round" shape-rendering="crispEdges"/>
</g>
<rect x="880.5" y="4.9" width="96.6" height="51.5" rx="4.5" fill="#000" opacity=".16" filter="url(#blur)"/>
<rect x="878.9" y="3.1" width="95.7" height="50.4" rx="3.5" fill="url(#g4)" stroke="#868686" stroke-width="1.3"/>
<rect x="880.1" y="4.3" width="93.3" height="48.0" rx="2.3" fill="none" stroke="#fff" stroke-width="1.1" opacity=".92"/>
<path d="M881.3 53.6H971.7Q974.7 53.6 974.7 50.6V5.5" fill="none" stroke="#6c6c6c" stroke-width="1.2" opacity=".75"/>
<text x="894.0" y="21.2" textLength="29.0" lengthAdjust="spacingAndGlyphs">Plot 0</text>
<rect x="935.0" y="8.2" width="28.0" height="17.7" fill="#fff"/>
<path d="M935.5 25.9V8.7H963.0" stroke="#585858" stroke-width="1" fill="none"/>
<polyline points="937.2,22.0 947.6,11.4 957.5,21.6 961.8,17.2" fill="none" stroke="#1565a8" stroke-width="1.05"/>
<text x="894.0" y="44.2" textLength="29.0" lengthAdjust="spacingAndGlyphs">Plot 1</text>
<rect x="935.0" y="31.0" width="28.0" height="17.8" fill="#fff"/>
<path d="M935.5 48.8V31.5H963.0" stroke="#585858" stroke-width="1" fill="none"/>
<polyline points="937.2,44.8 947.6,34.2 957.5,44.4 961.8,40.0" fill="none" stroke="#f5323c" stroke-width="1.05"/>
<rect x="935.2" y="43.2" width="4" height="4" fill="#fff" stroke="#f5323c" stroke-width="1"/>
<rect x="936.7" y="44.7" width="1" height="1" fill="#f5323c"/>
<rect x="945.6" y="32.6" width="4" height="4" fill="#fff" stroke="#f5323c" stroke-width="1"/>
<rect x="947.1" y="34.1" width="1" height="1" fill="#f5323c"/>
<rect x="955.5" y="42.8" width="4" height="4" fill="#fff" stroke="#f5323c" stroke-width="1"/>
<rect x="957.0" y="44.3" width="1" height="1" fill="#f5323c"/>
<rect x="311.5" y="309.5" width="84.1" height="27.6" rx="4.5" fill="#000" opacity=".16" filter="url(#blur)"/>
<rect x="309.9" y="307.8" width="83.2" height="26.5" rx="3.5" fill="url(#g5)" stroke="#868686" stroke-width="1.3"/>
<rect x="311.2" y="309.0" width="80.8" height="24.1" rx="2.3" fill="none" stroke="#fff" stroke-width="1.1" opacity=".92"/>
<path d="M312.3 334.2H390.2Q393.2 334.2 393.2 331.3V310.1" fill="none" stroke="#6c6c6c" stroke-width="1.2" opacity=".75"/>
<rect x="321.2" y="314.0" width="19.7" height="16.0" fill="#747474"/>
<path d="M321.7 330.0V314.5H340.9" stroke="#4e4e4e" stroke-width="1" fill="none"/>
<rect x="323.0" y="316.6" width="2.9" height="2.9" fill="#3cff2a"/>
<path d="M325.2 322.5H337.9M331.7 316.0V329.0" stroke="#000" stroke-width="1.3" fill="none"/>
<circle cx="331.7" cy="322.5" r="1.4" fill="#747474" stroke="#000" stroke-width=".8"/>
<rect x="343.0" y="314.0" width="17.2" height="16.0" fill="#d0d0d0"/>
<path d="M343.0 329.5H359.7V314.0" stroke="#8c8c8c" stroke-width="1" fill="none"/>
<path d="M343.5 329.0V314.5H359.2" stroke="#efefef" stroke-width="1" fill="none"/>
<rect x="344.8" y="316.6" width="2.9" height="2.9" fill="#2d6a1e"/>
<path d="M345.8 328.0L350.6 323.6" stroke="#000" stroke-width="2.2" stroke-linecap="round"/>
<path d="M345.8 328.0L350.6 323.6" stroke="#ddd" stroke-width=".7" stroke-dasharray="1 1"/>
<circle cx="353.8" cy="320.2" r="3.9" fill="#e3e3ff" stroke="#000" stroke-width="1.1"/>
<path d="M351.5 320.2H356.1M353.8 317.9V322.5" stroke="#000" stroke-width="1.1"/>
<path d="M353.7 326.4h5l-2.5 2.8z" fill="#000"/>
<rect x="363.9" y="314.0" width="19.0" height="16.0" fill="#d0d0d0"/>
<path d="M363.9 329.5H382.4V314.0" stroke="#8c8c8c" stroke-width="1" fill="none"/>
<path d="M364.4 329.0V314.5H381.9" stroke="#efefef" stroke-width="1" fill="none"/>
<rect x="365.7" y="316.6" width="2.9" height="2.9" fill="#2d6a1e"/>
<path transform="translate(363.9 314.0)" d="M6.8 8.6V4Q7.7 2.8 8.6 4V8.6M8.6 4V3.2Q9.6 1.6 10.6 3.2V8.6M10.6 3.6Q11.5 2.4 12.4 3.6V8.4M12.4 5Q13.6 3.8 14.4 5.5Q14.7 6.2 14.7 7V10.4L12.5 13.6M6.8 9.4L5.4 7.5H3.7L6.6 13.6" fill="none" stroke="#000" stroke-width=".95"/>
<text x="463.0" y="337.8" textLength="21.5" lengthAdjust="spacingAndGlyphs">zero</text>
<rect x="462.4" y="343.5" width="53.6" height="23.8" fill="#f0f0f0"/>
<path d="M462.4 343.5H516.0L512.0 347.5H466.4V363.3L462.4 367.3Z" fill="#cecece"/>
<path d="M464.4 345.5H514.0L512.0 347.5H466.4V363.3L464.4 365.3Z" fill="#b9b9b9"/>
<rect x="466.4" y="347.5" width="45.6" height="15.8" fill="#fbfbfb"/>
<ellipse cx="456.8" cy="353.9" rx="6.0" ry="12.3" fill="url(#idc)"/>
<path d="M451.8 353.5H461.7" stroke="#e8e8e8" stroke-width=".9"/>
<path d="M451.8 354.4H461.7" stroke="#8a8a8a" stroke-width=".9"/>
<path d="M454.6 351.1L456.9 346.7" stroke="#333" stroke-width="1.1"/>
<path d="M457.4 347.1L459.4 351.1H455.1" fill="none" stroke="#f4f4f4" stroke-width=".9"/>
<path d="M459.1 356.9H454.4L456.6 361.1" fill="none" stroke="#333" stroke-width="1.1"/>
<path d="M457.2 360.9L459.4 357.3" stroke="#f4f4f4" stroke-width=".9"/>
<text x="468.0" y="359.0" textLength="11.2" lengthAdjust="spacingAndGlyphs">70</text>
<text x="593.0" y="360.6" textLength="21.5" lengthAdjust="spacingAndGlyphs">Play</text>
<ellipse cx="647.6" cy="358.2" rx="26" ry="11.6" fill="#000" opacity=".22" filter="url(#blur)"/>
<ellipse cx="645.6" cy="356" rx="25.6" ry="11.4" fill="url(#playg)" stroke="#6f6f6f" stroke-width="1"/>
<ellipse cx="645.6" cy="356" rx="24.4" ry="10.3" fill="none" stroke="#fff" stroke-width="1.1"/>
<path d="M649.2 349.2H653Q667 351.5 667 356.1Q667 360.6 653 363H649.2Z" fill="url(#yel)" stroke="#8d8468" stroke-width=".9"/>
<text x="306.3" y="374.1" textLength="59.5" lengthAdjust="spacingAndGlyphs">Filter signal</text>
<rect x="311.7" y="384.3" width="665.6" height="244.9" rx="4.5" fill="#000" opacity=".16" filter="url(#blur)"/>
<rect x="310.1" y="382.5" width="664.7" height="243.8" rx="3.5" fill="url(#g6)" stroke="#868686" stroke-width="1.3"/>
<rect x="311.4" y="383.8" width="662.3" height="241.4" rx="2.3" fill="none" stroke="#fff" stroke-width="1.1" opacity=".92"/>
<path d="M312.5 626.4H971.9Q974.9 626.4 974.9 623.4V384.9" fill="none" stroke="#6c6c6c" stroke-width="1.2" opacity=".75"/>
<rect x="373.0" y="389.5" width="582.5" height="191.0" fill="#fff"/>
<path d="M379.3 389.5V580.5M384.5 389.5V580.5M389.8 389.5V580.5M395.1 389.5V580.5M400.4 389.5V580.5M405.6 389.5V580.5M410.9 389.5V580.5M416.2 389.5V580.5M421.5 389.5V580.5M426.7 389.5V580.5M432.0 389.5V580.5M437.3 389.5V580.5M442.6 389.5V580.5M447.8 389.5V580.5M453.1 389.5V580.5M458.4 389.5V580.5M463.6 389.5V580.5M468.9 389.5V580.5M474.2 389.5V580.5M479.5 389.5V580.5M484.7 389.5V580.5M490.0 389.5V580.5M495.3 389.5V580.5M500.6 389.5V580.5M505.8 389.5V580.5M511.1 389.5V580.5M516.4 389.5V580.5M521.7 389.5V580.5M526.9 389.5V580.5M532.2 389.5V580.5M537.5 389.5V580.5M542.8 389.5V580.5M548.0 389.5V580.5M553.3 389.5V580.5M558.6 389.5V580.5M563.8 389.5V580.5M569.1 389.5V580.5M574.4 389.5V580.5M579.7 389.5V580.5M584.9 389.5V580.5M590.2 389.5V580.5M595.5 389.5V580.5M600.8 389.5V580.5M606.0 389.5V580.5M611.3 389.5V580.5M616.6 389.5V580.5M621.9 389.5V580.5M627.1 389.5V580.5M632.4 389.5V580.5M637.7 389.5V580.5M642.9 389.5V580.5M648.2 389.5V580.5M653.5 389.5V580.5M658.8 389.5V580.5M664.0 389.5V580.5M669.3 389.5V580.5M674.6 389.5V580.5M679.9 389.5V580.5M685.1 389.5V580.5M690.4 389.5V580.5M695.7 389.5V580.5M701.0 389.5V580.5M706.2 389.5V580.5M711.5 389.5V580.5M716.8 389.5V580.5M722.1 389.5V580.5M727.3 389.5V580.5M732.6 389.5V580.5M737.9 389.5V580.5M743.1 389.5V580.5M748.4 389.5V580.5M753.7 389.5V580.5M759.0 389.5V580.5M764.2 389.5V580.5M769.5 389.5V580.5M774.8 389.5V580.5M780.1 389.5V580.5M785.3 389.5V580.5M790.6 389.5V580.5M795.9 389.5V580.5M801.2 389.5V580.5M806.4 389.5V580.5M811.7 389.5V580.5M817.0 389.5V580.5M822.2 389.5V580.5M827.5 389.5V580.5M832.8 389.5V580.5M838.1 389.5V580.5M843.3 389.5V580.5M848.6 389.5V580.5M853.9 389.5V580.5M859.2 389.5V580.5M864.4 389.5V580.5M869.7 389.5V580.5M875.0 389.5V580.5M880.3 389.5V580.5M885.5 389.5V580.5M890.8 389.5V580.5M896.1 389.5V580.5M901.4 389.5V580.5M906.6 389.5V580.5M911.9 389.5V580.5M917.2 389.5V580.5M922.4 389.5V580.5M927.7 389.5V580.5M933.0 389.5V580.5M938.3 389.5V580.5M943.5 389.5V580.5M948.8 389.5V580.5M954.1 389.5V580.5M373.0 579.0H955.5M373.0 572.8H955.5M373.0 566.5H955.5M373.0 560.2H955.5M373.0 553.9H955.5M373.0 547.6H955.5M373.0 541.3H955.5M373.0 535.0H955.5M373.0 528.7H955.5M373.0 522.4H955.5M373.0 516.1H955.5M373.0 509.9H955.5M373.0 503.6H955.5M373.0 497.3H955.5M373.0 491.0H955.5M373.0 484.7H955.5M373.0 478.4H955.5M373.0 472.1H955.5M373.0 465.8H955.5M373.0 459.5H955.5M373.0 453.2H955.5M373.0 447.0H955.5M373.0 440.7H955.5M373.0 434.4H955.5M373.0 428.1H955.5M373.0 421.8H955.5M373.0 415.5H955.5M373.0 409.2H955.5M373.0 402.9H955.5M373.0 396.6H955.5" stroke="#f2f2f2" stroke-width="1" fill="none" shape-rendering="crispEdges"/>
<path d="M400.4 389.5V580.5M426.7 389.5V580.5M453.1 389.5V580.5M479.5 389.5V580.5M505.8 389.5V580.5M532.2 389.5V580.5M558.6 389.5V580.5M584.9 389.5V580.5M611.3 389.5V580.5M637.7 389.5V580.5M664.0 389.5V580.5M690.4 389.5V580.5M716.8 389.5V580.5M743.1 389.5V580.5M769.5 389.5V580.5M795.9 389.5V580.5M822.2 389.5V580.5M848.6 389.5V580.5M875.0 389.5V580.5M901.4 389.5V580.5M927.7 389.5V580.5M954.1 389.5V580.5M373.0 421.8H955.5M373.0 453.2H955.5M373.0 484.7H955.5M373.0 516.1H955.5M373.0 547.6H955.5M373.0 579.0H955.5" stroke="#dedede" stroke-width="1" fill="none" shape-rendering="crispEdges"/>
<path d="M373.5 580.5V390.0H955.5" stroke="#5a5a5a" stroke-width="1" fill="none"/>
<path d="M367.2 390.4H371.8M367.2 421.8H371.8M367.2 453.2H371.8M367.2 484.7H371.8M367.2 516.1H371.8M367.2 547.6H371.8M367.2 579.0H371.8M374.0 582.0V586.6M400.4 582.0V586.6M426.7 582.0V586.6M453.1 582.0V586.6M479.5 582.0V586.6M505.8 582.0V586.6M532.2 582.0V586.6M558.6 582.0V586.6M584.9 582.0V586.6M611.3 582.0V586.6M637.7 582.0V586.6M664.0 582.0V586.6M690.4 582.0V586.6M716.8 582.0V586.6M743.1 582.0V586.6M769.5 582.0V586.6M795.9 582.0V586.6M822.2 582.0V586.6M848.6 582.0V586.6M875.0 582.0V586.6M901.4 582.0V586.6M927.7 582.0V586.6M954.1 582.0V586.6" stroke="#000" stroke-width="1" fill="none" shape-rendering="crispEdges"/>
<text x="363.5" y="394.8" text-anchor="end" textLength="11.2" lengthAdjust="spacingAndGlyphs">60</text>
<text x="363.5" y="426.2" text-anchor="end" textLength="11.2" lengthAdjust="spacingAndGlyphs">40</text>
<text x="363.5" y="457.6" text-anchor="end" textLength="11.2" lengthAdjust="spacingAndGlyphs">20</text>
<text x="363.5" y="489.1" text-anchor="end">0</text>
<text x="363.5" y="520.5" text-anchor="end" textLength="16.2" lengthAdjust="spacingAndGlyphs">-20</text>
<text x="363.5" y="552.0" text-anchor="end" textLength="16.2" lengthAdjust="spacingAndGlyphs">-40</text>
<text x="363.5" y="583.4" text-anchor="end" textLength="16.2" lengthAdjust="spacingAndGlyphs">-60</text>
<text x="373.2" y="598.5" text-anchor="middle">0</text>
<text x="399.6" y="598.5" text-anchor="middle" textLength="11.2" lengthAdjust="spacingAndGlyphs">25</text>
<text x="425.9" y="598.5" text-anchor="middle" textLength="11.2" lengthAdjust="spacingAndGlyphs">50</text>
<text x="452.3" y="598.5" text-anchor="middle" textLength="11.2" lengthAdjust="spacingAndGlyphs">75</text>
<text x="478.7" y="598.5" text-anchor="middle" textLength="17.2" lengthAdjust="spacingAndGlyphs">100</text>
<text x="505.0" y="598.5" text-anchor="middle" textLength="17.2" lengthAdjust="spacingAndGlyphs">125</text>
<text x="531.4" y="598.5" text-anchor="middle" textLength="17.2" lengthAdjust="spacingAndGlyphs">150</text>
<text x="557.8" y="598.5" text-anchor="middle" textLength="17.2" lengthAdjust="spacingAndGlyphs">175</text>
<text x="584.1" y="598.5" text-anchor="middle" textLength="17.2" lengthAdjust="spacingAndGlyphs">200</text>
<text x="610.5" y="598.5" text-anchor="middle" textLength="17.2" lengthAdjust="spacingAndGlyphs">225</text>
<text x="636.9" y="598.5" text-anchor="middle" textLength="17.2" lengthAdjust="spacingAndGlyphs">250</text>
<text x="663.2" y="598.5" text-anchor="middle" textLength="17.2" lengthAdjust="spacingAndGlyphs">275</text>
<text x="689.6" y="598.5" text-anchor="middle" textLength="17.2" lengthAdjust="spacingAndGlyphs">300</text>
<text x="716.0" y="598.5" text-anchor="middle" textLength="17.2" lengthAdjust="spacingAndGlyphs">325</text>
<text x="742.3" y="598.5" text-anchor="middle" textLength="17.2" lengthAdjust="spacingAndGlyphs">350</text>
<text x="768.7" y="598.5" text-anchor="middle" textLength="17.2" lengthAdjust="spacingAndGlyphs">375</text>
<text x="795.1" y="598.5" text-anchor="middle" textLength="17.2" lengthAdjust="spacingAndGlyphs">400</text>
<text x="821.4" y="598.5" text-anchor="middle" textLength="17.2" lengthAdjust="spacingAndGlyphs">425</text>
<text x="847.8" y="598.5" text-anchor="middle" textLength="17.2" lengthAdjust="spacingAndGlyphs">450</text>
<text x="874.2" y="598.5" text-anchor="middle" textLength="17.2" lengthAdjust="spacingAndGlyphs">475</text>
<text x="900.6" y="598.5" text-anchor="middle" textLength="17.2" lengthAdjust="spacingAndGlyphs">500</text>
<text x="926.9" y="598.5" text-anchor="middle" textLength="17.2" lengthAdjust="spacingAndGlyphs">525</text>
<text x="953.3" y="598.5" text-anchor="middle" textLength="17.2" lengthAdjust="spacingAndGlyphs">550</text>
<text transform="translate(340.7 485.5) rotate(-90)" text-anchor="middle" textLength="56.0" lengthAdjust="spacingAndGlyphs">Amplitude</text>
<text x="641.0" y="616.0" text-anchor="middle" textLength="27.0" lengthAdjust="spacingAndGlyphs">Time</text>
<g clip-path="url(#cs2)">
<path d="M374.0 563.3L375.1 563.3L376.1 563.3L377.2 563.3L378.2 563.3L379.3 563.3L380.3 563.3L381.4 563.3L382.4 563.3L383.5 563.3L384.5 563.3L385.6 563.3L386.7 563.3L387.7 563.3L388.8 563.3L389.8 563.3L390.9 563.3L391.9 563.3L393.0 563.3L394.0 563.3L395.1 563.3L396.1 563.3L397.2 563.3L398.3 563.3L399.3 563.3L400.4 563.3L401.4 563.3L402.5 563.3L403.5 563.3L404.6 563.3L405.6 563.3L406.7 563.3L407.8 563.3L408.8 563.3L409.9 563.3L410.9 563.3L412.0 563.3L413.0 563.3L414.1 563.3L415.1 563.3L416.2 563.3L417.2 563.3L418.3 563.3L419.4 563.3L420.4 563.3L421.5 563.3L422.5 563.3L423.6 563.3L424.6 563.3L425.7 563.3L426.7 563.3L427.8 563.3L428.8 563.3L429.9 563.3L431.0 563.3L432.0 563.3L433.1 563.3L434.1 563.3L435.2 563.3L436.2 563.3L437.3 563.3L438.3 563.3L439.4 563.3L440.4 563.3L441.5 563.3L442.6 563.3L443.6 563.3L444.7 563.3L445.7 563.3L446.8 563.3L447.8 563.3L448.9 563.3L449.9 563.3L451.0 563.3L452.0 563.3L453.1 563.3L454.2 563.3L455.2 563.3L456.3 563.3L457.3 563.3L458.4 563.3L459.4 563.3L460.5 563.3L461.5 563.3L462.6 563.3L463.6 563.3L464.7 563.3L465.8 563.3L466.8 563.3L467.9 563.3L468.9 563.3L470.0 563.3L471.0 563.3L472.1 563.3L473.1 563.3L474.2 563.3L475.3 563.3L476.3 563.3L477.4 563.3L478.4 563.3L479.5 563.3L480.5 445.4L481.6 406.1L482.6 406.1L483.7 406.1L484.7 406.1L485.8 406.1L486.9 406.1L487.9 406.1L489.0 406.1L490.0 406.1L491.1 406.1L492.1 406.1L493.2 484.7L494.2 563.3L495.3 563.3L496.3 563.3L497.4 563.3L498.5 563.3L499.5 563.3L500.6 563.3L501.6 563.3L502.7 563.3L503.7 563.3L504.8 563.3L505.8 563.3L506.9 563.3L507.9 563.3L509.0 563.3L510.1 563.3L511.1 563.3L512.2 563.3L513.2 563.3L514.3 563.3L515.3 563.3L516.4 563.3L517.4 563.3L518.5 563.3L519.5 563.3L520.6 563.3L521.7 563.3L522.7 563.3L523.8 563.3L524.8 563.3L525.9 563.3L526.9 563.3L528.0 563.3L529.0 563.3L530.1 563.3L531.2 563.3L532.2 563.3L533.3 563.3L534.3 563.3L535.4 563.3L536.4 563.3L537.5 563.3L538.5 563.3L539.6 563.3L540.6 563.3L541.7 563.3L542.8 563.3L543.8 563.3L544.9 563.3L545.9 563.3L547.0 563.3L548.0 563.3L549.1 563.3L550.1 563.3L551.2 563.3L552.2 563.3L553.3 563.3L554.4 563.3L555.4 563.3L556.5 563.3L557.5 563.3L558.6 563.3L559.6 563.3L560.7 563.3L561.7 563.3L562.8 563.3L563.8 563.3L564.9 563.3L566.0 563.3L567.0 563.3L568.1 563.3L569.1 563.3L570.2 563.3L571.2 563.3L572.3 563.3L573.3 563.3L574.4 563.3L575.4 563.3L576.5 563.3L577.6 563.3L578.6 563.3L579.7 563.3L580.7 563.3L581.8 563.3L582.8 563.3L583.9 563.3L584.9 563.3L586.0 563.3L587.0 563.3L588.1 563.3L589.2 563.3L590.2 563.3L591.3 563.3L592.3 563.3L593.4 563.3L594.4 563.3L595.5 563.3L596.5 563.3L597.6 563.3L598.7 563.3L599.7 563.3L600.8 563.3L601.8 563.3L602.9 563.3L603.9 563.3L605.0 563.3L606.0 563.3L607.1 563.3L608.1 563.3L609.2 563.3L610.3 563.3L611.3 563.3L612.4 563.3L613.4 563.3L614.5 563.3L615.5 563.3L616.6 563.3L617.6 563.3L618.7 563.3L619.7 563.3L620.8 563.3L621.9 563.3L622.9 563.3L624.0 563.3L625.0 563.3L626.1 563.3L627.1 563.3L628.2 563.3L629.2 563.3L630.3 563.3L631.3 563.3L632.4 445.4L633.5 406.1L634.5 406.1L635.6 406.1L636.6 406.1L637.7 406.1L638.7 406.1L639.8 406.1L640.8 406.1L641.9 406.1L642.9 406.1L644.0 406.1L645.1 406.1L646.1 484.7L647.2 563.3L648.2 563.3L649.3 563.3L650.3 563.3L651.4 563.3L652.4 563.3L653.5 563.3L654.6 563.3L655.6 563.3L656.7 563.3L657.7 563.3L658.8 563.3L659.8 563.3L660.9 563.3L661.9 563.3L663.0 563.3L664.0 563.3L665.1 563.3L666.2 563.3L667.2 563.3L668.3 563.3L669.3 563.3L670.4 563.3L671.4 563.3L672.5 563.3L673.5 563.3L674.6 563.3L675.6 563.3L676.7 563.3L677.8 563.3L678.8 563.3L679.9 563.3L680.9 563.3L682.0 563.3L683.0 563.3L684.1 563.3L685.1 563.3L686.2 563.3L687.2 563.3L688.3 563.3L689.4 563.3L690.4 563.3L691.5 563.3L692.5 563.3L693.6 563.3L694.6 563.3L695.7 563.3L696.7 563.3L697.8 563.3L698.8 563.3L699.9 563.3L701.0 563.3L702.0 563.3L703.1 563.3L704.1 563.3L705.2 563.3L706.2 563.3L707.3 563.3L708.3 563.3L709.4 563.3L710.4 563.3L711.5 563.3L712.6 563.3L713.6 563.3L714.7 563.3L715.7 563.3L716.8 563.3L717.8 563.3L718.9 563.3L719.9 563.3L721.0 563.3L722.1 563.3L723.1 563.3L724.2 563.3L725.2 563.3L726.3 563.3L727.3 563.3L728.4 563.3L729.4 563.3L730.5 563.3L731.5 563.3L732.6 563.3L733.7 563.3L734.7 563.3L735.8 563.3L736.8 563.3L737.9 563.3L738.9 563.3L740.0 563.3L741.0 563.3L742.1 563.3L743.1 563.3L744.2 563.3L745.3 563.3L746.3 563.3L747.4 563.3L748.4 563.3L749.5 563.3L750.5 563.3L751.6 563.3L752.6 563.3L753.7 563.3L754.7 563.3L755.8 563.3L756.9 563.3L757.9 563.3L759.0 563.3L760.0 563.3L761.1 563.3L762.1 563.3L763.2 563.3L764.2 563.3L765.3 563.3L766.3 563.3L767.4 563.3L768.5 563.3L769.5 563.3L770.6 563.3L771.6 563.3L772.7 563.3L773.7 563.3L774.8 563.3L775.8 563.3L776.9 563.3L778.0 563.3L779.0 563.3L780.1 563.3L781.1 563.3L782.2 563.3L783.2 563.3L784.3 563.3L785.3 563.3L786.4 563.3L787.4 445.4L788.5 406.1L789.6 406.1L790.6 406.1L791.7 406.1L792.7 406.1L793.8 406.1L794.8 406.1L795.9 406.1L796.9 406.1L798.0 406.1L799.0 406.1L800.1 484.7L801.2 563.3L802.2 563.3L803.3 563.3L804.3 563.3L805.4 563.3L806.4 563.3L807.5 563.3L808.5 563.3L809.6 563.3L810.6 563.3L811.7 563.3L812.8 563.3L813.8 563.3L814.9 563.3L815.9 563.3L817.0 563.3L818.0 563.3L819.1 563.3L820.1 563.3L821.2 563.3L822.2 563.3L823.3 563.3L824.4 563.3L825.4 563.3L826.5 563.3L827.5 563.3L828.6 563.3L829.6 563.3L830.7 563.3L831.7 563.3L832.8 563.3L833.8 563.3L834.9 563.3L836.0 563.3L837.0 563.3L838.1 563.3L839.1 563.3L840.2 563.3L841.2 563.3L842.3 563.3L843.3 563.3L844.4 563.3L845.5 563.3L846.5 563.3L847.6 563.3L848.6 563.3L849.7 563.3L850.7 563.3L851.8 563.3L852.8 563.3L853.9 563.3L854.9 563.3L856.0 563.3L857.1 563.3L858.1 563.3L859.2 563.3L860.2 563.3L861.3 563.3L862.3 563.3L863.4 563.3L864.4 563.3L865.5 563.3L866.5 563.3L867.6 563.3L868.7 563.3L869.7 563.3L870.8 563.3L871.8 563.3L872.9 563.3L873.9 563.3L875.0 563.3L876.0 563.3L877.1 563.3L878.1 563.3L879.2 563.3L880.3 563.3L881.3 563.3L882.4 563.3L883.4 563.3L884.5 563.3L885.5 563.3L886.6 563.3L887.6 563.3L888.7 563.3L889.7 563.3L890.8 563.3L891.9 563.3L892.9 563.3L894.0 563.3L895.0 563.3L896.1 563.3L897.1 563.3L898.2 563.3L899.2 563.3L900.3 563.3L901.4 563.3L902.4 563.3L903.5 563.3L904.5 563.3L905.6 563.3L906.6 563.3L907.7 563.3L908.7 563.3L909.8 563.3L910.8 563.3L911.9 563.3L913.0 563.3L914.0 563.3L915.1 563.3L916.1 563.3L917.2 563.3L918.2 563.3L919.3 563.3L920.3 563.3L921.4 563.3L922.4 563.3L923.5 563.3L924.6 563.3L925.6 563.3L926.7 563.3L927.7 563.3L928.8 563.3L929.8 563.3L930.9 563.3L931.9 563.3L933.0 563.3L934.0 563.3L935.1 563.3L936.2 563.3L937.2 563.3L938.3 563.3L939.3 563.3L940.4 445.4L941.4 406.1L942.5 406.1L943.5 406.1L944.6 406.1L945.6 406.1L946.7 406.1L947.8 406.1L948.8 406.1L949.9 406.1L950.9 406.1L952.0 406.1L953.0 484.7L954.1 563.3" stroke="#f83c3c" stroke-width="1" fill="none" shape-rendering="crispEdges"/>
<polyline points="374.0,469.8 375.1,468.5 376.1,470.4 377.2,469.3 378.2,468.0 379.3,464.4 380.3,463.0 381.4,460.9 382.4,459.5 383.5,458.4 384.5,455.5 385.6,451.9 386.7,446.3 387.7,444.6 388.8,443.4 389.8,443.1 390.9,442.2 391.9,438.3 393.0,436.4 394.0,433.5 395.1,432.8 396.1,428.9 397.2,426.9 398.3,427.1 399.3,428.6 400.4,427.8 401.4,426.5 402.5,426.3 403.5,426.9 404.6,425.8 405.6,422.8 406.7,423.5 407.8,424.7 408.8,427.2 409.9,428.1 410.9,428.4 412.0,428.9 413.0,426.0 414.1,425.7 415.1,426.9 416.2,427.9 417.2,428.7 418.3,429.4 419.4,431.2 420.4,432.0 421.5,431.7 422.5,431.8 423.6,434.1 424.6,434.2 425.7,433.9 426.7,431.4 427.8,430.7 428.8,432.1 429.9,433.7 431.0,439.0 432.0,442.3 433.1,448.7 434.1,451.2 435.2,457.0 436.2,457.2 437.3,457.6 438.3,457.6 439.4,457.8 440.4,460.8 441.5,461.4 442.6,464.9 443.6,467.9 444.7,471.2 445.7,473.0 446.8,476.5 447.8,479.6 448.9,485.2 449.9,486.1 451.0,490.4 452.0,493.5 453.1,497.8 454.2,500.4 455.2,504.0 456.3,504.8 457.3,507.9 458.4,507.8 459.4,510.1 460.5,511.1 461.5,512.7 462.6,513.7 463.6,514.4 464.7,517.0 465.8,522.7 466.8,525.3 467.9,526.6 468.9,525.8 470.0,527.5 471.0,528.1 472.1,529.8 473.1,530.6 474.2,531.2 475.3,531.8 476.3,531.7 477.4,529.9 478.4,527.9 479.5,528.5 480.5,530.3 481.6,530.2 482.6,527.2 483.7,526.5 484.7,527.9 485.8,531.1 486.9,532.6 487.9,533.8 489.0,535.7 490.0,538.3 491.1,540.7 492.1,540.9 493.2,542.8 494.2,542.0 495.3,540.5 496.3,536.7 497.4,535.4 498.5,532.2 499.5,530.8 500.6,527.0 501.6,526.6 502.7,525.3 503.7,523.2 504.8,519.8 505.8,515.8 506.9,513.4 507.9,512.0 509.0,511.3 510.1,511.3 511.1,509.3 512.2,508.3 513.2,509.2 514.3,511.1 515.3,512.9 516.4,512.9 517.4,512.1 518.5,511.2 519.5,511.5 520.6,512.3 521.7,510.4 522.7,506.8 523.8,502.5 524.8,501.2 525.9,498.4 526.9,497.0 528.0,494.3 529.0,492.0 530.1,489.2 531.2,486.6 532.2,482.5 533.3,480.3 534.3,475.4 535.4,472.6 536.4,467.1 537.5,464.1 538.5,460.5 539.6,457.5 540.6,452.3 541.7,449.6 542.8,445.8 543.8,443.6 544.9,441.2 545.9,436.4 547.0,434.7 548.0,433.3 549.1,433.0 550.1,432.4 551.2,429.6 552.2,429.7 553.3,429.5 554.4,430.6 555.4,432.2 556.5,431.9 557.5,433.3 558.6,433.7 559.6,432.8 560.7,428.7 561.7,425.4 562.8,422.1 563.8,421.1 564.9,421.1 566.0,422.0 567.0,423.7 568.1,423.2 569.1,424.0 570.2,422.6 571.2,422.8 572.3,424.1 573.3,426.8 574.4,430.8 575.4,432.3 576.5,433.3 577.6,433.3 578.6,435.8 579.7,436.0 580.7,437.2 581.8,438.6 582.8,443.3 583.9,447.3 584.9,449.5 586.0,451.5 587.0,453.1 588.1,455.0 589.2,456.0 590.2,457.4 591.3,459.8 592.3,461.9 593.4,464.6 594.4,466.2 595.5,465.8 596.5,467.0 597.6,466.2 598.7,470.8 599.7,473.2 600.8,477.1 601.8,479.8 602.9,482.7 603.9,487.1 605.0,490.6 606.0,494.0 607.1,497.1 608.1,497.5 609.2,499.9 610.3,500.0 611.3,506.8 612.4,509.0 613.4,512.6 614.5,512.1 615.5,512.3 616.6,512.9 617.6,513.6 618.7,514.9 619.7,513.4 620.8,513.6 621.9,514.7 622.9,519.3 624.0,521.2 625.0,524.5 626.1,526.0 627.1,525.4 628.2,524.8 629.2,525.7 630.3,528.8 631.3,529.7 632.4,531.4 633.5,532.0 634.5,534.3 635.6,536.2 636.6,538.0 637.7,542.9 638.7,545.1 639.8,547.8 640.8,547.3 641.9,547.6 642.9,549.2 644.0,549.6 645.1,546.9 646.1,545.2 647.2,543.7 648.2,544.1 649.3,544.1 650.3,542.2 651.4,542.2 652.4,539.4 653.5,539.9 654.6,537.0 655.6,535.1 656.7,531.5 657.7,527.8 658.8,525.4 659.8,519.3 660.9,516.2 661.9,510.8 663.0,508.3 664.0,503.9 665.1,502.4 666.2,498.3 667.2,496.2 668.3,490.9 669.3,488.2 670.4,484.2 671.4,482.5 672.5,478.6 673.5,475.5 674.6,474.1 675.6,475.3 676.7,476.6 677.8,474.4 678.8,471.8 679.9,472.4 680.9,473.4 682.0,475.4 683.0,474.3 684.1,474.3 685.1,471.9 686.2,471.0 687.2,466.7 688.3,464.8 689.4,463.2 690.4,464.3 691.5,464.4 692.5,460.5 693.6,458.2 694.6,456.5 695.7,454.8 696.7,450.3 697.8,446.3 698.8,441.5 699.9,438.4 701.0,434.8 702.0,435.3 703.1,434.3 704.1,433.6 705.2,433.7 706.2,432.4 707.3,433.2 708.3,430.5 709.4,431.8 710.4,427.5 711.5,426.6 712.6,423.8 713.6,424.4 714.7,425.6 715.7,428.4 716.8,429.2 717.8,426.5 718.9,423.8 719.9,422.5 721.0,422.6 722.1,424.5 723.1,425.3 724.2,424.7 725.2,424.1 726.3,426.8 727.3,429.9 728.4,431.3 729.4,431.0 730.5,433.8 731.5,435.3 732.6,440.1 733.7,440.5 734.7,441.1 735.8,439.8 736.8,444.3 737.9,447.7 738.9,454.2 740.0,454.6 741.0,457.1 742.1,457.3 743.1,459.7 744.2,462.0 745.3,462.9 746.3,465.9 747.4,468.5 748.4,474.2 749.5,478.2 750.5,481.7 751.6,482.2 752.6,483.6 753.7,484.1 754.7,487.8 755.8,490.5 756.9,494.2 757.9,496.1 759.0,497.5 760.0,500.1 761.1,499.9 762.1,502.1 763.2,501.8 764.2,504.7 765.3,504.3 766.3,508.3 767.4,509.2 768.5,512.7 769.5,512.6 770.6,513.4 771.6,515.7 772.7,518.7 773.7,522.5 774.8,522.9 775.8,525.6 776.9,527.0 778.0,531.0 779.0,532.8 780.1,535.7 781.1,536.5 782.2,538.5 783.2,540.6 784.3,542.6 785.3,543.4 786.4,546.6 787.4,548.1 788.5,548.4 789.6,544.9 790.6,542.3 791.7,541.5 792.7,542.3 793.8,545.0 794.8,545.1 795.9,543.7 796.9,540.8 798.0,541.2 799.0,541.1 800.1,540.8 801.2,537.3 802.2,536.4 803.3,536.7 804.3,538.2 805.4,537.7 806.4,536.8 807.5,534.2 808.5,531.1 809.6,527.3 810.6,523.8 811.7,522.3 812.8,519.5 813.8,518.0 814.9,514.4 815.9,510.5 817.0,507.4 818.0,506.8 819.1,506.2 820.1,504.7 821.2,502.2 822.2,500.6 823.3,496.8 824.4,492.0 825.4,490.6 826.5,489.9 827.5,489.8 828.6,489.9 829.6,490.3 830.7,490.9 831.7,489.0 832.8,489.3 833.8,487.7 834.9,484.4 836.0,479.0 837.0,474.4 838.1,473.3 839.1,470.2 840.2,468.8 841.2,467.4 842.3,466.0 843.3,464.5 844.4,460.2 845.5,458.6 846.5,454.5 847.6,452.3 848.6,450.5 849.7,449.3 850.7,448.4 851.8,447.6 852.8,446.4 853.9,446.1 854.9,445.4 856.0,446.3 857.1,445.9 858.1,443.8 859.2,438.8 860.2,435.6 861.3,432.4 862.3,432.8 863.4,429.9 864.4,426.8 865.5,424.3 866.5,424.8 867.6,426.8 868.7,429.0 869.7,429.6 870.8,431.1 871.8,431.7 872.9,431.1 873.9,430.2 875.0,429.5 876.0,430.6 877.1,433.1 878.1,434.3 879.2,435.6 880.3,434.1 881.3,434.1 882.4,433.2 883.4,435.2 884.5,438.3 885.5,438.8 886.6,438.0 887.6,438.4 888.7,439.9 889.7,440.7 890.8,441.3 891.9,440.9 892.9,444.0 894.0,445.5 895.0,447.4 896.1,449.4 897.1,452.8 898.2,458.2 899.2,465.4 900.3,467.9 901.4,474.5 902.4,477.2 903.5,483.5 904.5,485.6 905.6,487.5 906.6,490.4 907.7,492.6 908.7,496.2 909.8,498.4 910.8,501.7 911.9,504.5 913.0,506.7 914.0,507.6 915.1,508.8 916.1,509.0 917.2,511.5 918.2,514.3 919.3,519.1 920.3,522.0 921.4,522.5 922.4,522.4 923.5,524.3 924.6,525.1 925.6,528.1 926.7,529.4 927.7,531.2 928.8,528.2 929.8,527.5 930.9,529.5 931.9,532.1 933.0,532.8 934.0,531.9 935.1,534.0 936.2,536.6 937.2,538.5 938.3,538.8 939.3,537.6 940.4,536.7 941.4,538.0 942.5,539.3 943.5,539.7 944.6,537.4 945.6,534.6 946.7,531.2 947.8,526.8 948.8,521.0 949.9,516.7 950.9,513.1 952.0,511.4 953.0,508.0 954.1,505.4" fill="none" stroke="#0d5c9c" stroke-width="1" stroke-linejoin="round" shape-rendering="crispEdges"/>
</g>
<rect x="789.3" y="349.7" width="84.5" height="27.4" rx="4.5" fill="#000" opacity=".16" filter="url(#blur)"/>
<rect x="787.7" y="347.9" width="83.6" height="26.3" rx="3.5" fill="url(#g8)" stroke="#868686" stroke-width="1.3"/>
<rect x="788.9" y="349.2" width="81.2" height="23.9" rx="2.3" fill="none" stroke="#fff" stroke-width="1.1" opacity=".92"/>
<path d="M790.1 374.2H868.4Q871.4 374.2 871.4 371.3V350.3" fill="none" stroke="#6c6c6c" stroke-width="1.2" opacity=".75"/>
<rect x="800.0" y="354.3" width="19.0" height="15.9" fill="#d0d0d0"/>
<path d="M800.0 369.7H818.5V354.3" stroke="#8c8c8c" stroke-width="1" fill="none"/>
<path d="M800.5 369.2V354.8H818.0" stroke="#efefef" stroke-width="1" fill="none"/>
<rect x="801.8" y="356.9" width="2.9" height="2.9" fill="#2d6a1e"/>
<path d="M804.0 362.8H816.0M810.2 356.3V369.2" stroke="#000" stroke-width="1.3" fill="none"/>
<circle cx="810.2" cy="362.8" r="1.4" fill="#d0d0d0" stroke="#000" stroke-width=".8"/>
<rect x="820.0" y="354.3" width="18.0" height="15.9" fill="#747474"/>
<path d="M820.5 370.2V354.8H838.0" stroke="#4e4e4e" stroke-width="1" fill="none"/>
<rect x="821.8" y="356.9" width="2.9" height="2.9" fill="#3cff2a"/>
<path d="M822.8 368.2L828.0 363.8" stroke="#000" stroke-width="2.2" stroke-linecap="round"/>
<path d="M822.8 368.2L828.0 363.8" stroke="#ddd" stroke-width=".7" stroke-dasharray="1 1"/>
<circle cx="831.2" cy="360.4" r="3.9" fill="#e3e3ff" stroke="#000" stroke-width="1.1"/>
<path d="M828.9 360.4H833.5M831.2 358.1V362.8" stroke="#000" stroke-width="1.1"/>
<path d="M831.5 366.6h5l-2.5 2.8z" fill="#000"/>
<rect x="842.0" y="354.3" width="18.6" height="15.9" fill="#d0d0d0"/>
<path d="M842.0 369.7H860.1V354.3" stroke="#8c8c8c" stroke-width="1" fill="none"/>
<path d="M842.5 369.2V354.8H859.6" stroke="#efefef" stroke-width="1" fill="none"/>
<rect x="843.8" y="356.9" width="2.9" height="2.9" fill="#2d6a1e"/>
<path transform="translate(842.0 354.3)" d="M6.8 8.6V4Q7.7 2.8 8.6 4V8.6M8.6 4V3.2Q9.6 1.6 10.6 3.2V8.6M10.6 3.6Q11.5 2.4 12.4 3.6V8.4M12.4 5Q13.6 3.8 14.4 5.5Q14.7 6.2 14.7 7V10.4L12.5 13.6M6.8 9.4L5.4 7.5H3.7L6.6 13.6" fill="none" stroke="#000" stroke-width=".95"/>
<rect x="880.3" y="353.7" width="96.7" height="28.5" rx="4.5" fill="#000" opacity=".16" filter="url(#blur)"/>
<rect x="878.7" y="351.9" width="95.8" height="27.4" rx="3.5" fill="url(#g9)" stroke="#868686" stroke-width="1.3"/>
<rect x="879.9" y="353.2" width="93.4" height="25.0" rx="2.3" fill="none" stroke="#fff" stroke-width="1.1" opacity=".92"/>
<path d="M881.1 379.4H971.6Q974.6 379.4 974.6 376.4V354.3" fill="none" stroke="#6c6c6c" stroke-width="1.2" opacity=".75"/>
<text x="894.0" y="370.0" textLength="29.0" lengthAdjust="spacingAndGlyphs">Plot 0</text>
<rect x="935.0" y="357.0" width="28.5" height="17.6" fill="#fff"/>
<path d="M935.5 374.6V357.5H963.5" stroke="#585858" stroke-width="1" fill="none"/>
<polyline points="937.2,370.8 947.6,360.2 957.5,370.4 961.8,366.0" fill="none" stroke="#1565a8" stroke-width="1.05"/>
<text x="990.4" y="37.6" textLength="107.5" lengthAdjust="spacingAndGlyphs">Vertical Pointer Slide</text>
<rect x="992.7" y="46.9" width="59.6" height="273.9" rx="4.5" fill="#000" opacity=".16" filter="url(#blur)"/>
<rect x="991.1" y="45.1" width="58.7" height="272.8" rx="3.5" fill="url(#g10)" stroke="#868686" stroke-width="1.3"/>
<rect x="992.4" y="46.4" width="56.3" height="270.4" rx="2.3" fill="none" stroke="#fff" stroke-width="1.1" opacity=".92"/>
<path d="M993.5 318.0H1046.9Q1049.8 318.0 1049.8 315.0V47.5" fill="none" stroke="#6c6c6c" stroke-width="1.2" opacity=".75"/>
<rect x="1025.2" y="54.3" width="13.6" height="258.7" rx="6.8" fill="#e9e9ee"/>
<g clip-path="url(#c11)"><rect x="1026.0" y="54.8" width="12.0" height="257.4" fill="#7a7a7a"/><rect x="1026.0" y="66.5" width="12.0" height="245.7" fill="#fdba19"/></g>
<path d="M1017.0 60.8H1022.0" stroke="#000" stroke-width="1" shape-rendering="crispEdges"/>
<text x="1014.2" y="65.2" text-anchor="end" textLength="17.2" lengthAdjust="spacingAndGlyphs">360</text>
<path d="M1017.0 101.8H1022.0" stroke="#000" stroke-width="1" shape-rendering="crispEdges"/>
<text x="1014.2" y="106.2" text-anchor="end" textLength="17.2" lengthAdjust="spacingAndGlyphs">300</text>
<path d="M1017.0 136.0H1022.0" stroke="#000" stroke-width="1" shape-rendering="crispEdges"/>
<text x="1014.2" y="140.4" text-anchor="end" textLength="17.2" lengthAdjust="spacingAndGlyphs">250</text>
<path d="M1017.0 170.2H1022.0" stroke="#000" stroke-width="1" shape-rendering="crispEdges"/>
<text x="1014.2" y="174.6" text-anchor="end" textLength="17.2" lengthAdjust="spacingAndGlyphs">200</text>
<path d="M1017.0 204.4H1022.0" stroke="#000" stroke-width="1" shape-rendering="crispEdges"/>
<text x="1014.2" y="208.8" text-anchor="end" textLength="17.2" lengthAdjust="spacingAndGlyphs">150</text>
<path d="M1017.0 238.5H1022.0" stroke="#000" stroke-width="1" shape-rendering="crispEdges"/>
<text x="1014.2" y="242.9" text-anchor="end" textLength="17.2" lengthAdjust="spacingAndGlyphs">100</text>
<path d="M1017.0 272.7H1022.0" stroke="#000" stroke-width="1" shape-rendering="crispEdges"/>
<text x="1014.2" y="277.1" text-anchor="end" textLength="11.2" lengthAdjust="spacingAndGlyphs">50</text>
<path d="M1017.0 306.9H1022.0" stroke="#000" stroke-width="1" shape-rendering="crispEdges"/>
<text x="1014.2" y="311.3" text-anchor="end">0</text>
<path d="M1017.0 67.6H1022.0" stroke="#000" stroke-width="1" shape-rendering="crispEdges"/>
<path d="M1038.6 66.5L1043.6 61.5H1049.5V71.5H1043.6Z" fill="#fff" stroke="#8a8a8a" stroke-width="1"/>
<path d="M1042.8 66.5L1046.0 63.9V69.1Z" fill="#555"/>
<rect x="993.1" y="322.8" width="78.3" height="30.9" rx="4.5" fill="#000" opacity=".16" filter="url(#blur)"/>
<rect x="991.5" y="321.0" width="77.4" height="29.8" rx="3.5" fill="url(#g12)" stroke="#868686" stroke-width="1.3"/>
<rect x="992.8" y="322.2" width="75.0" height="27.4" rx="2.3" fill="none" stroke="#fff" stroke-width="1.1" opacity=".92"/>
<path d="M993.9 350.9H1066.0Q1068.9 350.9 1068.9 347.9V323.4" fill="none" stroke="#6c6c6c" stroke-width="1.2" opacity=".75"/>
<rect x="998.8" y="326.4" width="11.6" height="8.5" rx="2" fill="#f3f3f3" stroke="#9c9c9c" stroke-width="1"/>
<path d="M1001.6 332.3L1004.6 328.8L1007.6 332.3Z" fill="#6a6a6a"/>
<rect x="998.8" y="337.1" width="11.6" height="8.5" rx="2" fill="#f3f3f3" stroke="#9c9c9c" stroke-width="1"/>
<path d="M1001.6 339.9L1004.6 343.4L1007.6 339.9Z" fill="#6a6a6a"/>
<rect x="1015.5" y="326.5" width="48.0" height="19.0" fill="#fbfbfb" stroke="#7d7d7d" stroke-width="1"/>
<path d="M1016.0 327.5H1063.0" stroke="#c8c8c8" stroke-width="1"/>
<text x="1018.8" y="340.3" textLength="17.2" lengthAdjust="spacingAndGlyphs">350</text>
<circle cx="1188.4" cy="183.8" r="124.6" fill="#fff"/>
<circle cx="1188.4" cy="183.8" r="31.1" fill="none" stroke="#d0d0d0" stroke-width="1" shape-rendering="crispEdges"/>
<circle cx="1188.4" cy="183.8" r="62.2" fill="none" stroke="#d0d0d0" stroke-width="1" shape-rendering="crispEdges"/>
<circle cx="1188.4" cy="183.8" r="93.3" fill="none" stroke="#d0d0d0" stroke-width="1" shape-rendering="crispEdges"/>
<path d="M1063.8 183.8H1313.0M1188.4 59.2V308.4" stroke="#d0d0d0" stroke-width="1" shape-rendering="crispEdges"/>
<text x="1203.8" y="42.4" text-anchor="middle">0</text>
<text x="1293.4" y="43.9" textLength="63.5" lengthAdjust="spacingAndGlyphs">Rangefinder</text>
<text x="1295.7" y="58.7" textLength="47.5" lengthAdjust="spacingAndGlyphs">Indicator</text>
<text x="1317.4" y="175.5" textLength="29.5" lengthAdjust="spacingAndGlyphs">90 по</text>
<text x="1317.4" y="190.6" textLength="42.0" lengthAdjust="spacingAndGlyphs">270 про</text>
<text x="1206.8" y="352.6" text-anchor="middle" textLength="17.2" lengthAdjust="spacingAndGlyphs">180</text>
<path d="M1196.6 180.1L1202.1 181.1L1206.9 182.6L1210.8 184.6L1213.2 187.0L1214.9 190.9L1214.0 193.3L1211.2 194.5L1213.2 198.4L1215.6 203.2L1217.0 206.3L1215.6 210.3L1215.2 214.2L1217.8 217.0L1217.0 219.8L1214.4 222.1L1213.2 226.1L1210.8 230.0L1208.5 234.0L1206.5 235.7L1202.1 236.0L1199.4 234.0L1197.4 235.7L1193.8 235.6L1191.1 233.2L1187.1 231.6L1183.2 229.6L1180.8 228.6L1176.9 227.5L1173.7 226.2L1171.3 227.7L1169.4 225.3L1168.8 222.9L1165.0 222.5L1163.0 219.4L1162.2 215.4L1162.0 211.5L1163.4 208.3L1165.0 206.3L1165.0 196.1L1168.2 193.3L1171.3 189.4L1173.7 187.0L1178.4 185.0L1183.2 183.4L1187.9 182.0L1192.7 181.1ZM1188.7 187.0L1199.0 187.0L1199.4 189.7L1202.5 191.7L1201.7 196.9L1201.3 199.2L1204.5 203.6L1205.3 207.1L1205.1 211.1L1206.1 212.7L1205.7 217.4L1204.5 222.1L1200.6 223.7L1196.6 222.9L1192.7 220.6L1190.7 216.6L1188.7 215.4L1184.8 215.2L1182.4 217.0L1180.0 219.0L1177.3 213.8L1176.9 207.9L1175.1 205.9L1175.1 196.1L1178.4 192.5L1183.2 189.7L1186.3 188.0ZM1168.6 210.7L1170.7 209.9L1171.2 214.2L1173.7 218.6L1175.1 220.6L1174.6 222.1L1172.1 219.0L1169.4 216.6L1168.3 213.4ZM1185.4 221.7L1187.0 221.3L1188.7 225.3L1191.1 226.9L1195.0 228.1L1196.2 229.6L1195.0 230.0L1191.1 228.1L1187.9 226.5ZM1211.2 215.4L1212.8 215.0L1212.4 217.4L1211.2 218.2ZM1202.9 230.0L1204.1 229.9L1204.1 231.0L1202.9 231.2Z" fill="#f00" fill-rule="evenodd"/>
<rect x="1259.6" y="337.8" width="77.6" height="30.7" rx="4.5" fill="#000" opacity=".16" filter="url(#blur)"/>
<rect x="1258.1" y="336.0" width="76.7" height="29.6" rx="3.5" fill="url(#g13)" stroke="#868686" stroke-width="1.3"/>
<rect x="1259.2" y="337.2" width="74.3" height="27.2" rx="2.3" fill="none" stroke="#fff" stroke-width="1.1" opacity=".92"/>
<path d="M1260.4 365.7H1331.8Q1334.7 365.7 1334.7 362.7V338.4" fill="none" stroke="#6c6c6c" stroke-width="1.2" opacity=".75"/>
<rect x="1264.9" y="341.2" width="11.6" height="8.8" rx="2" fill="#f3f3f3" stroke="#9c9c9c" stroke-width="1"/>
<path d="M1267.7 347.3L1270.7 343.8L1273.7 347.3Z" fill="#6a6a6a"/>
<rect x="1264.9" y="352.2" width="11.6" height="8.8" rx="2" fill="#f3f3f3" stroke="#9c9c9c" stroke-width="1"/>
<path d="M1267.7 355.0L1270.7 358.5L1273.7 355.0Z" fill="#6a6a6a"/>
<rect x="1281.5" y="341.8" width="48.0" height="18.7" fill="#fbfbfb" stroke="#7d7d7d" stroke-width="1"/>
<path d="M1282.0 342.8H1329.0" stroke="#c8c8c8" stroke-width="1"/>
<text x="1284.5" y="355.6" textLength="44.2" lengthAdjust="spacingAndGlyphs" clip-path="url(#c14)">0,009809</text>
<text x="996.5" y="361.2" textLength="123.5" lengthAdjust="spacingAndGlyphs">Horizontal Pointer Slide</text>
<rect x="998.7" y="370.2" width="339.6" height="48.0" rx="4.5" fill="#000" opacity=".16" filter="url(#blur)"/>
<rect x="997.1" y="368.4" width="338.7" height="46.9" rx="3.5" fill="url(#g15)" stroke="#868686" stroke-width="1.3"/>
<rect x="998.4" y="369.7" width="336.3" height="44.5" rx="2.3" fill="none" stroke="#fff" stroke-width="1.1" opacity=".92"/>
<path d="M999.5 415.4H1332.9Q1335.8 415.4 1335.8 412.4V370.8" fill="none" stroke="#6c6c6c" stroke-width="1.2" opacity=".75"/>
<rect x="1003.0" y="378.2" width="327.1" height="13.6" rx="6.8" fill="#ededf0"/>
<g clip-path="url(#c16)"><rect x="1003.5" y="378.8" width="325.9" height="12.0" fill="#7a7a7a"/><rect x="1003.5" y="378.8" width="108.9" height="12.0" fill="#fdba19"/></g>
<path d="M1009.0 394.8V399.3" stroke="#000" stroke-width="1" shape-rendering="crispEdges"/>
<text x="1008.3" y="411.5" text-anchor="middle" textLength="26.2" lengthAdjust="spacingAndGlyphs">0,005</text>
<path d="M1061.6 394.8V399.3" stroke="#000" stroke-width="1" shape-rendering="crispEdges"/>
<text x="1060.9" y="411.5" text-anchor="middle" textLength="32.2" lengthAdjust="spacingAndGlyphs">0,0075</text>
<path d="M1114.2 394.8V399.3" stroke="#000" stroke-width="1" shape-rendering="crispEdges"/>
<text x="1113.5" y="411.5" text-anchor="middle" textLength="20.2" lengthAdjust="spacingAndGlyphs">0,01</text>
<path d="M1166.7 394.8V399.3" stroke="#000" stroke-width="1" shape-rendering="crispEdges"/>
<text x="1166.0" y="411.5" text-anchor="middle" textLength="32.2" lengthAdjust="spacingAndGlyphs">0,0125</text>
<path d="M1219.3 394.8V399.3" stroke="#000" stroke-width="1" shape-rendering="crispEdges"/>
<text x="1218.6" y="411.5" text-anchor="middle" textLength="26.2" lengthAdjust="spacingAndGlyphs">0,015</text>
<path d="M1271.9 394.8V399.3" stroke="#000" stroke-width="1" shape-rendering="crispEdges"/>
<text x="1271.2" y="411.5" text-anchor="middle" textLength="32.2" lengthAdjust="spacingAndGlyphs">0,0175</text>
<path d="M1324.5 394.8V399.3" stroke="#000" stroke-width="1" shape-rendering="crispEdges"/>
<text x="1323.8" y="411.5" text-anchor="middle" textLength="20.2" lengthAdjust="spacingAndGlyphs">0,02</text>
<path d="M1111.0 379.4L1105.7 374.4V368.6H1116.3V374.4Z" fill="#fff" stroke="#8a8a8a" stroke-width="1"/>
<path d="M1111.0 375.4L1108.2 372.2H1113.8Z" fill="#555"/>
<circle cx="1184.6" cy="571.2" r="130.7" fill="#fff"/>
<circle cx="1184.6" cy="571.2" r="32.8" fill="none" stroke="#d0d0d0" stroke-width="1" shape-rendering="crispEdges"/>
<circle cx="1184.6" cy="571.2" r="65.6" fill="none" stroke="#d0d0d0" stroke-width="1" shape-rendering="crispEdges"/>
<circle cx="1184.6" cy="571.2" r="98.4" fill="none" stroke="#d0d0d0" stroke-width="1" shape-rendering="crispEdges"/>
<path d="M1053.9 571.2H1315.3M1184.6 440.5V701.9" stroke="#d0d0d0" stroke-width="1" shape-rendering="crispEdges"/>
<text x="1016.2" y="467.3" textLength="64.0" lengthAdjust="spacingAndGlyphs">Rangefinder</text>
<text x="1018.5" y="482.4" textLength="56.5" lengthAdjust="spacingAndGlyphs">Indicator 2</text>
<path d="M1182.9 634.2L1185.1 632.0L1187.9 632.0L1188.3 630.9L1192.8 630.9L1193.9 632.0L1194.2 633.1L1195.8 633.1L1196.2 632.0L1199.1 632.0L1199.3 630.9L1202.8 630.9L1203.9 632.4L1203.9 634.5L1202.8 636.0L1200.2 636.0L1198.0 638.8L1194.0 638.8L1193.7 637.9L1192.3 637.9L1191.7 638.8L1188.1 638.8L1187.8 637.9L1184.4 637.9L1183.1 636.7Z" fill="#f00"/>
<text x="1332.8" y="448.8" textLength="21.0" lengthAdjust="spacingAndGlyphs">+ gr</text>
<rect x="1313.7" y="457.9" width="59.6" height="274.1" rx="4.5" fill="#000" opacity=".16" filter="url(#blur)"/>
<rect x="1312.2" y="456.1" width="58.7" height="273.0" rx="3.5" fill="url(#g17)" stroke="#868686" stroke-width="1.3"/>
<rect x="1313.3" y="457.4" width="56.3" height="270.6" rx="2.3" fill="none" stroke="#fff" stroke-width="1.1" opacity=".92"/>
<path d="M1314.5 729.1H1367.9Q1370.8 729.1 1370.8 726.2V458.5" fill="none" stroke="#6c6c6c" stroke-width="1.2" opacity=".75"/>
<rect x="1346.2" y="464.9" width="13.6" height="259.3" rx="6.8" fill="#e9e9ee"/>
<g clip-path="url(#c18)"><rect x="1347.0" y="465.4" width="12.0" height="258.0" fill="#7a7a7a"/><rect x="1347.0" y="677.5" width="12.0" height="45.9" fill="#fdba19"/></g>
<path d="M1338.0 471.9H1343.0" stroke="#000" stroke-width="1" shape-rendering="crispEdges"/>
<text x="1335.2" y="476.3" text-anchor="end" textLength="17.2" lengthAdjust="spacingAndGlyphs">360</text>
<path d="M1338.0 512.9H1343.0" stroke="#000" stroke-width="1" shape-rendering="crispEdges"/>
<text x="1335.2" y="517.2" text-anchor="end" textLength="17.2" lengthAdjust="spacingAndGlyphs">300</text>
<path d="M1338.0 547.0H1343.0" stroke="#000" stroke-width="1" shape-rendering="crispEdges"/>
<text x="1335.2" y="551.4" text-anchor="end" textLength="17.2" lengthAdjust="spacingAndGlyphs">250</text>
<path d="M1338.0 581.1H1343.0" stroke="#000" stroke-width="1" shape-rendering="crispEdges"/>
<text x="1335.2" y="585.5" text-anchor="end" textLength="17.2" lengthAdjust="spacingAndGlyphs">200</text>
<path d="M1338.0 615.2H1343.0" stroke="#000" stroke-width="1" shape-rendering="crispEdges"/>
<text x="1335.2" y="619.6" text-anchor="end" textLength="17.2" lengthAdjust="spacingAndGlyphs">150</text>
<path d="M1338.0 649.4H1343.0" stroke="#000" stroke-width="1" shape-rendering="crispEdges"/>
<text x="1335.2" y="653.8" text-anchor="end" textLength="17.2" lengthAdjust="spacingAndGlyphs">100</text>
<path d="M1338.0 683.5H1343.0" stroke="#000" stroke-width="1" shape-rendering="crispEdges"/>
<text x="1335.2" y="687.9" text-anchor="end" textLength="11.2" lengthAdjust="spacingAndGlyphs">50</text>
<path d="M1338.0 717.6H1343.0" stroke="#000" stroke-width="1" shape-rendering="crispEdges"/>
<text x="1335.2" y="722.0" text-anchor="end">0</text>
<path d="M1338.0 478.7H1343.0" stroke="#000" stroke-width="1" shape-rendering="crispEdges"/>
<path d="M1359.8 677.5L1364.8 672.5H1370.6V682.5H1364.8Z" fill="#fff" stroke="#8a8a8a" stroke-width="1"/>
<path d="M1364.0 677.5L1367.2 674.9V680.1Z" fill="#555"/>
<rect x="1293.2" y="734.1" width="79.2" height="31.2" rx="4.5" fill="#000" opacity=".16" filter="url(#blur)"/>
<rect x="1291.7" y="732.3" width="78.3" height="30.1" rx="3.5" fill="url(#g19)" stroke="#868686" stroke-width="1.3"/>
<rect x="1292.8" y="733.5" width="75.9" height="27.7" rx="2.3" fill="none" stroke="#fff" stroke-width="1.1" opacity=".92"/>
<path d="M1294.0 762.5H1367.0Q1369.9 762.5 1369.9 759.5V734.7" fill="none" stroke="#6c6c6c" stroke-width="1.2" opacity=".75"/>
<rect x="1298.3" y="737.1" width="12.1" height="8.7" rx="2" fill="#f3f3f3" stroke="#9c9c9c" stroke-width="1"/>
<path d="M1301.3 743.2L1304.3 739.7L1307.3 743.2Z" fill="#6a6a6a"/>
<rect x="1298.3" y="748.0" width="12.1" height="8.7" rx="2" fill="#f3f3f3" stroke="#9c9c9c" stroke-width="1"/>
<path d="M1301.3 750.9L1304.3 754.4L1307.3 750.9Z" fill="#6a6a6a"/>
<rect x="1315.9" y="737.5" width="47.8" height="19.0" fill="#fbfbfb" stroke="#7d7d7d" stroke-width="1"/>
<path d="M1316.4 738.5H1363.2" stroke="#c8c8c8" stroke-width="1"/>
<text x="1319.3" y="751.6" textLength="38.2" lengthAdjust="spacingAndGlyphs">57,6098</text>
<text x="1099.7" y="771.4" textLength="38.0" lengthAdjust="spacingAndGlyphs">синхро</text>
<rect x="1097.6" y="775.0" width="54.8" height="25.4" fill="#f0f0f0"/>
<path d="M1097.6 775.0H1152.4L1148.4 779.0H1101.6V796.4L1097.6 800.4Z" fill="#cecece"/>
<path d="M1099.6 777.0H1150.4L1148.4 779.0H1101.6V796.4L1099.6 798.4Z" fill="#b9b9b9"/>
<rect x="1101.6" y="779.0" width="46.8" height="17.4" fill="#d3d3d3"/>
<text x="1103.3" y="792.4" textLength="38.2" lengthAdjust="spacingAndGlyphs">109,241</text>
<text x="1158.8" y="792.7">x-y</text>
<rect x="1157.4" y="798.6" width="54.6" height="24.0" fill="#f0f0f0"/>
<path d="M1157.4 798.6H1212.0L1208.0 802.6H1161.4V818.6L1157.4 822.6Z" fill="#cecece"/>
<path d="M1159.4 800.6H1210.0L1208.0 802.6H1161.4V818.6L1159.4 820.6Z" fill="#b9b9b9"/>
<rect x="1161.4" y="802.6" width="46.6" height="16.0" fill="#d3d3d3"/>
<text x="1164.3" y="814.5" textLength="43.2" lengthAdjust="spacingAndGlyphs" clip-path="url(#c20)">-172,704</text>
<text x="1099.7" y="818.5" textLength="32.0" lengthAdjust="spacingAndGlyphs">масса</text>
<rect x="1097.6" y="823.3" width="54.8" height="24.3" fill="#f0f0f0"/>
<path d="M1097.6 823.3H1152.4L1148.4 827.3H1101.6V843.6L1097.6 847.6Z" fill="#cecece"/>
<path d="M1099.6 825.3H1150.4L1148.4 827.3H1101.6V843.6L1099.6 845.6Z" fill="#b9b9b9"/>
<rect x="1101.6" y="827.3" width="46.8" height="16.3" fill="#d3d3d3"/>
<text x="1104.0" y="839.7" textLength="43.2" lengthAdjust="spacingAndGlyphs" clip-path="url(#c21)">-121,072</text>
<text x="1133.3" y="876.5" textLength="132.7" lengthAdjust="spacingAndGlyphs">Horizontal Pointer Slide 2</text>
<rect x="1300.4" y="853.8" width="78.5" height="31.1" rx="4.5" fill="#000" opacity=".16" filter="url(#blur)"/>
<rect x="1298.9" y="852.0" width="77.6" height="30.0" rx="3.5" fill="url(#g22)" stroke="#868686" stroke-width="1.3"/>
<rect x="1300.0" y="853.2" width="75.2" height="27.6" rx="2.3" fill="none" stroke="#fff" stroke-width="1.1" opacity=".92"/>
<path d="M1301.2 882.1H1373.5Q1376.4 882.1 1376.4 879.1V854.4" fill="none" stroke="#6c6c6c" stroke-width="1.2" opacity=".75"/>
<rect x="1305.9" y="857.5" width="11.8" height="8.2" rx="2" fill="#f3f3f3" stroke="#9c9c9c" stroke-width="1"/>
<path d="M1308.8 863.3L1311.8 859.8L1314.8 863.3Z" fill="#6a6a6a"/>
<rect x="1305.9" y="867.9" width="11.8" height="8.2" rx="2" fill="#f3f3f3" stroke="#9c9c9c" stroke-width="1"/>
<path d="M1308.8 870.5L1311.8 874.0L1314.8 870.5Z" fill="#6a6a6a"/>
<rect x="1322.5" y="857.9" width="47.6" height="18.8" fill="#fbfbfb" stroke="#7d7d7d" stroke-width="1"/>
<path d="M1323.0 858.9H1369.6" stroke="#c8c8c8" stroke-width="1"/>
<text x="1325.8" y="871.6" textLength="20.2" lengthAdjust="spacingAndGlyphs">0,02</text>
<rect x="1135.5" y="886.4" width="243.8" height="47.3" rx="4.5" fill="#000" opacity=".16" filter="url(#blur)"/>
<rect x="1134.0" y="884.6" width="242.9" height="46.2" rx="3.5" fill="url(#g23)" stroke="#868686" stroke-width="1.3"/>
<rect x="1135.1" y="885.9" width="240.5" height="43.8" rx="2.3" fill="none" stroke="#fff" stroke-width="1.1" opacity=".92"/>
<path d="M1136.3 930.9H1373.9Q1376.8 930.9 1376.8 927.9V887.0" fill="none" stroke="#6c6c6c" stroke-width="1.2" opacity=".75"/>
<rect x="1139.5" y="893.9" width="231.8" height="14.1" rx="7.0" fill="#ededf0"/>
<g clip-path="url(#c24)"><rect x="1140.0" y="894.5" width="230.6" height="12.5" fill="#7a7a7a"/><rect x="1140.0" y="894.5" width="62.9" height="12.5" fill="#fdba19"/></g>
<path d="M1146.4 910.8V915.8" stroke="#000" stroke-width="1" shape-rendering="crispEdges"/>
<text x="1145.7" y="928.0" text-anchor="middle" textLength="20.2" lengthAdjust="spacingAndGlyphs">0,01</text>
<path d="M1201.2 910.8V915.8" stroke="#000" stroke-width="1" shape-rendering="crispEdges"/>
<text x="1200.5" y="928.0" text-anchor="middle" textLength="20.2" lengthAdjust="spacingAndGlyphs">0,02</text>
<path d="M1256.0 910.8V915.8" stroke="#000" stroke-width="1" shape-rendering="crispEdges"/>
<text x="1255.3" y="928.0" text-anchor="middle" textLength="20.2" lengthAdjust="spacingAndGlyphs">0,03</text>
<path d="M1310.8 910.8V915.8" stroke="#000" stroke-width="1" shape-rendering="crispEdges"/>
<text x="1310.1" y="928.0" text-anchor="middle" textLength="20.2" lengthAdjust="spacingAndGlyphs">0,04</text>
<path d="M1365.6 910.8V915.8" stroke="#000" stroke-width="1" shape-rendering="crispEdges"/>
<text x="1364.9" y="928.0" text-anchor="middle" textLength="20.2" lengthAdjust="spacingAndGlyphs">0,05</text>
<path d="M1201.5 895.1L1196.2 890.1V884.8H1206.8V890.1Z" fill="#fff" stroke="#8a8a8a" stroke-width="1"/>
<path d="M1201.5 891.1L1198.7 887.9H1204.3Z" fill="#555"/>
<text x="331.0" y="655.6">Filter</text>
<ellipse cx="357.4" cy="679.8" rx="24" ry="9.6" fill="#000" opacity=".3" filter="url(#blur)"/>
<ellipse cx="354.9" cy="677.4" rx="23.7" ry="9.4" fill="url(#playg2)" stroke="#3c3c3c" stroke-width="1"/>
<path d="M361 673H363.5Q365 673 366.5 673.8Q373.6 676 373.6 677.4Q373.6 678.8 366.5 681Q365 681.8 363.5 681.8H361Z" fill="url(#grn)"/>
<text x="445.3" y="662.6" textLength="41.5" lengthAdjust="spacingAndGlyphs">window</text>
<rect x="445.8" y="668.9" width="145.4" height="31.3" rx="4.5" fill="#000" opacity=".16" filter="url(#blur)"/>
<rect x="444.2" y="667.1" width="144.5" height="30.2" rx="3.5" fill="url(#g25)" stroke="#868686" stroke-width="1.3"/>
<rect x="445.5" y="668.4" width="142.1" height="27.8" rx="2.3" fill="none" stroke="#fff" stroke-width="1.1" opacity=".92"/>
<path d="M446.6 697.4H585.8Q588.8 697.4 588.8 694.4V669.5" fill="none" stroke="#6c6c6c" stroke-width="1.2" opacity=".75"/>
<rect x="450.8" y="672.5" width="11.7" height="8.4" rx="2" fill="#f3f3f3" stroke="#9c9c9c" stroke-width="1"/>
<path d="M453.6 678.4L456.6 674.9L459.6 678.4Z" fill="#6a6a6a"/>
<rect x="450.8" y="683.1" width="11.7" height="8.4" rx="2" fill="#f3f3f3" stroke="#9c9c9c" stroke-width="1"/>
<path d="M453.6 685.8L456.6 689.3L459.6 685.8Z" fill="#6a6a6a"/>
<rect x="467.0" y="673.0" width="116.5" height="18.8" fill="#fbfbfb" stroke="#7d7d7d" stroke-width="1"/>
<path d="M467.5 674.0H583.0" stroke="#c8c8c8" stroke-width="1"/>
<text x="524.6" y="687.3" text-anchor="middle" textLength="29.0" lengthAdjust="spacingAndGlyphs">None</text>
<rect x="613.2" y="672.7" width="96.8" height="26.5" rx="4.5" fill="#000" opacity=".16" filter="url(#blur)"/>
<rect x="611.6" y="670.9" width="95.9" height="25.4" rx="3.5" fill="url(#g26)" stroke="#868686" stroke-width="1.3"/>
<rect x="612.9" y="672.1" width="93.5" height="23.0" rx="2.3" fill="none" stroke="#fff" stroke-width="1.1" opacity=".92"/>
<path d="M614.0 696.4H704.6Q707.6 696.4 707.6 693.4V673.3" fill="none" stroke="#6c6c6c" stroke-width="1.2" opacity=".75"/>
<text x="625.0" y="687.3" textLength="29.0" lengthAdjust="spacingAndGlyphs">Plot 0</text>
<rect x="665.8" y="674.3" width="28.5" height="17.3" fill="#fff"/>
<path d="M666.3 691.6V674.8H694.3" stroke="#585858" stroke-width="1" fill="none"/>
<polyline points="668.0,688.1 678.4,677.5 688.3,687.7 692.6,683.3" fill="none" stroke="#1565a8" stroke-width="1.05"/>
<text x="43.4" y="695.8" textLength="108.5" lengthAdjust="spacingAndGlyphs">Amplitude spectrum</text>
<rect x="183.3" y="670.4" width="84.6" height="28.1" rx="4.5" fill="#000" opacity=".16" filter="url(#blur)"/>
<rect x="181.8" y="668.6" width="83.7" height="27.0" rx="3.5" fill="url(#g27)" stroke="#868686" stroke-width="1.3"/>
<rect x="183.0" y="669.9" width="81.3" height="24.6" rx="2.3" fill="none" stroke="#fff" stroke-width="1.1" opacity=".92"/>
<path d="M184.1 695.7H262.5Q265.4 695.7 265.4 692.7V671.0" fill="none" stroke="#6c6c6c" stroke-width="1.2" opacity=".75"/>
<rect x="192.6" y="675.8" width="18.9" height="15.0" fill="#d0d0d0"/>
<path d="M192.6 690.3H211.0V675.8" stroke="#8c8c8c" stroke-width="1" fill="none"/>
<path d="M193.1 689.8V676.3H210.5" stroke="#efefef" stroke-width="1" fill="none"/>
<rect x="194.4" y="678.4" width="2.9" height="2.9" fill="#2d6a1e"/>
<path d="M196.6 683.8H208.5M202.8 677.8V689.8" stroke="#000" stroke-width="1.3" fill="none"/>
<circle cx="202.8" cy="683.8" r="1.4" fill="#d0d0d0" stroke="#000" stroke-width=".8"/>
<rect x="213.0" y="675.8" width="19.4" height="15.0" fill="#747474"/>
<path d="M213.5 690.8V676.3H232.4" stroke="#4e4e4e" stroke-width="1" fill="none"/>
<rect x="214.8" y="678.4" width="2.9" height="2.9" fill="#3cff2a"/>
<path d="M215.8 688.8L221.7 684.9" stroke="#000" stroke-width="2.2" stroke-linecap="round"/>
<path d="M215.8 688.8L221.7 684.9" stroke="#ddd" stroke-width=".7" stroke-dasharray="1 1"/>
<circle cx="224.9" cy="681.5" r="3.9" fill="#e3e3ff" stroke="#000" stroke-width="1.1"/>
<path d="M222.6 681.5H227.2M224.9 679.2V683.8" stroke="#000" stroke-width="1.1"/>
<path d="M225.9 687.2h5l-2.5 2.8z" fill="#000"/>
<rect x="234.3" y="675.8" width="19.7" height="15.0" fill="#d0d0d0"/>
<path d="M234.3 690.3H253.5V675.8" stroke="#8c8c8c" stroke-width="1" fill="none"/>
<path d="M234.8 689.8V676.3H253.0" stroke="#efefef" stroke-width="1" fill="none"/>
<rect x="236.1" y="678.4" width="2.9" height="2.9" fill="#2d6a1e"/>
<path transform="translate(234.3 675.8)" d="M6.8 8.6V4Q7.7 2.8 8.6 4V8.6M8.6 4V3.2Q9.6 1.6 10.6 3.2V8.6M10.6 3.6Q11.5 2.4 12.4 3.6V8.4M12.4 5Q13.6 3.8 14.4 5.5Q14.7 6.2 14.7 7V10.4L12.5 13.6M6.8 9.4L5.4 7.5H3.7L6.6 13.6" fill="none" stroke="#000" stroke-width=".95"/>
<rect x="46.2" y="704.9" width="665.6" height="234.1" rx="4.5" fill="#000" opacity=".16" filter="url(#blur)"/>
<rect x="44.6" y="703.1" width="664.7" height="233.0" rx="3.5" fill="url(#g28)" stroke="#868686" stroke-width="1.3"/>
<rect x="45.9" y="704.4" width="662.3" height="230.6" rx="2.3" fill="none" stroke="#fff" stroke-width="1.1" opacity=".92"/>
<path d="M47.0 936.1H706.4Q709.4 936.1 709.4 933.2V705.5" fill="none" stroke="#6c6c6c" stroke-width="1.2" opacity=".75"/>
<rect x="95.0" y="714.2" width="593.8" height="174.4" fill="#fff"/>
<path d="M96.4 714.2V888.6M103.8 714.2V888.6M111.2 714.2V888.6M118.6 714.2V888.6M126.0 714.2V888.6M133.3 714.2V888.6M140.7 714.2V888.6M148.1 714.2V888.6M155.5 714.2V888.6M162.9 714.2V888.6M170.3 714.2V888.6M177.7 714.2V888.6M185.1 714.2V888.6M192.4 714.2V888.6M199.8 714.2V888.6M207.2 714.2V888.6M214.6 714.2V888.6M222.0 714.2V888.6M229.4 714.2V888.6M236.8 714.2V888.6M244.2 714.2V888.6M251.5 714.2V888.6M258.9 714.2V888.6M266.3 714.2V888.6M273.7 714.2V888.6M281.1 714.2V888.6M288.5 714.2V888.6M295.9 714.2V888.6M303.3 714.2V888.6M310.7 714.2V888.6M318.0 714.2V888.6M325.4 714.2V888.6M332.8 714.2V888.6M340.2 714.2V888.6M347.6 714.2V888.6M355.0 714.2V888.6M362.4 714.2V888.6M369.8 714.2V888.6M377.1 714.2V888.6M384.5 714.2V888.6M391.9 714.2V888.6M399.3 714.2V888.6M406.7 714.2V888.6M414.1 714.2V888.6M421.5 714.2V888.6M428.9 714.2V888.6M436.2 714.2V888.6M443.6 714.2V888.6M451.0 714.2V888.6M458.4 714.2V888.6M465.8 714.2V888.6M473.2 714.2V888.6M480.6 714.2V888.6M488.0 714.2V888.6M495.4 714.2V888.6M502.7 714.2V888.6M510.1 714.2V888.6M517.5 714.2V888.6M524.9 714.2V888.6M532.3 714.2V888.6M539.7 714.2V888.6M547.1 714.2V888.6M554.5 714.2V888.6M561.8 714.2V888.6M569.2 714.2V888.6M576.6 714.2V888.6M584.0 714.2V888.6M591.4 714.2V888.6M598.8 714.2V888.6M606.2 714.2V888.6M613.6 714.2V888.6M620.9 714.2V888.6M628.3 714.2V888.6M635.7 714.2V888.6M643.1 714.2V888.6M650.5 714.2V888.6M657.9 714.2V888.6M665.3 714.2V888.6M672.7 714.2V888.6M680.1 714.2V888.6M687.4 714.2V888.6M95.0 887.4H688.8M95.0 881.7H688.8M95.0 876.0H688.8M95.0 870.2H688.8M95.0 864.5H688.8M95.0 858.8H688.8M95.0 853.1H688.8M95.0 847.4H688.8M95.0 841.6H688.8M95.0 835.9H688.8M95.0 830.2H688.8M95.0 824.5H688.8M95.0 818.8H688.8M95.0 813.0H688.8M95.0 807.3H688.8M95.0 801.6H688.8M95.0 795.9H688.8M95.0 790.2H688.8M95.0 784.4H688.8M95.0 778.7H688.8M95.0 773.0H688.8M95.0 767.3H688.8M95.0 761.6H688.8M95.0 755.8H688.8M95.0 750.1H688.8M95.0 744.4H688.8M95.0 738.7H688.8M95.0 733.0H688.8M95.0 727.2H688.8M95.0 721.5H688.8M95.0 715.8H688.8" stroke="#f2f2f2" stroke-width="1" fill="none" shape-rendering="crispEdges"/>
<path d="M96.4 714.2V888.6M133.3 714.2V888.6M170.3 714.2V888.6M207.2 714.2V888.6M244.2 714.2V888.6M281.1 714.2V888.6M318.0 714.2V888.6M355.0 714.2V888.6M391.9 714.2V888.6M428.9 714.2V888.6M465.8 714.2V888.6M502.7 714.2V888.6M539.7 714.2V888.6M576.6 714.2V888.6M613.6 714.2V888.6M650.5 714.2V888.6M687.4 714.2V888.6M95.0 715.8H688.8M95.0 744.4H688.8M95.0 773.0H688.8M95.0 801.6H688.8M95.0 830.2H688.8M95.0 858.8H688.8M95.0 887.4H688.8" stroke="#dedede" stroke-width="1" fill="none" shape-rendering="crispEdges"/>
<path d="M95.5 888.6V714.7H688.8" stroke="#5a5a5a" stroke-width="1" fill="none"/>
<path d="M88.8 715.8H93.6M88.8 744.4H93.6M88.8 773.0H93.6M88.8 801.6H93.6M88.8 830.2H93.6M88.8 858.8H93.6M88.8 887.4H93.6M96.4 890.0V894.8M133.3 890.0V894.8M170.3 890.0V894.8M207.2 890.0V894.8M244.2 890.0V894.8M281.1 890.0V894.8M318.0 890.0V894.8M355.0 890.0V894.8M391.9 890.0V894.8M428.9 890.0V894.8M465.8 890.0V894.8M502.7 890.0V894.8M539.7 890.0V894.8M576.6 890.0V894.8M613.6 890.0V894.8M650.5 890.0V894.8M687.4 890.0V894.8" stroke="#000" stroke-width="1" fill="none" shape-rendering="crispEdges"/>
<text x="85.3" y="720.2" text-anchor="end" textLength="11.2" lengthAdjust="spacingAndGlyphs">30</text>
<text x="85.3" y="748.8" text-anchor="end" textLength="11.2" lengthAdjust="spacingAndGlyphs">25</text>
<text x="85.3" y="777.4" text-anchor="end" textLength="11.2" lengthAdjust="spacingAndGlyphs">20</text>
<text x="85.3" y="806.0" text-anchor="end" textLength="11.2" lengthAdjust="spacingAndGlyphs">15</text>
<text x="85.3" y="834.6" text-anchor="end" textLength="11.2" lengthAdjust="spacingAndGlyphs">10</text>
<text x="85.3" y="863.2" text-anchor="end">5</text>
<text x="85.3" y="891.8" text-anchor="end">0</text>
<text x="95.6" y="907.3" text-anchor="middle">0</text>
<text x="132.5" y="907.3" text-anchor="middle" textLength="17.2" lengthAdjust="spacingAndGlyphs">100</text>
<text x="169.5" y="907.3" text-anchor="middle" textLength="17.2" lengthAdjust="spacingAndGlyphs">200</text>
<text x="206.4" y="907.3" text-anchor="middle" textLength="17.2" lengthAdjust="spacingAndGlyphs">300</text>
<text x="243.4" y="907.3" text-anchor="middle" textLength="17.2" lengthAdjust="spacingAndGlyphs">400</text>
<text x="280.3" y="907.3" text-anchor="middle" textLength="17.2" lengthAdjust="spacingAndGlyphs">500</text>
<text x="317.2" y="907.3" text-anchor="middle" textLength="17.2" lengthAdjust="spacingAndGlyphs">600</text>
<text x="354.2" y="907.3" text-anchor="middle" textLength="17.2" lengthAdjust="spacingAndGlyphs">700</text>
<text x="391.1" y="907.3" text-anchor="middle" textLength="17.2" lengthAdjust="spacingAndGlyphs">800</text>
<text x="428.1" y="907.3" text-anchor="middle" textLength="17.2" lengthAdjust="spacingAndGlyphs">900</text>
<text x="465.0" y="907.3" text-anchor="middle" textLength="23.2" lengthAdjust="spacingAndGlyphs">1000</text>
<text x="501.9" y="907.3" text-anchor="middle" textLength="23.2" lengthAdjust="spacingAndGlyphs">1100</text>
<text x="538.9" y="907.3" text-anchor="middle" textLength="23.2" lengthAdjust="spacingAndGlyphs">1200</text>
<text x="575.8" y="907.3" text-anchor="middle" textLength="23.2" lengthAdjust="spacingAndGlyphs">1300</text>
<text x="612.8" y="907.3" text-anchor="middle" textLength="23.2" lengthAdjust="spacingAndGlyphs">1400</text>
<text x="649.7" y="907.3" text-anchor="middle" textLength="23.2" lengthAdjust="spacingAndGlyphs">1500</text>
<text x="686.6" y="907.3" text-anchor="middle" textLength="23.2" lengthAdjust="spacingAndGlyphs">1600</text>
<text transform="translate(69.0 801.6) rotate(-90)" text-anchor="middle" textLength="54.0" lengthAdjust="spacingAndGlyphs">amplitude</text>
<text x="390.0" y="924.6" text-anchor="middle">гц</text>
<g clip-path="url(#cs3)">
<polyline points="96.4,878.8 98.6,877.7 100.7,870.2 102.9,853.1 105.1,747.3 107.2,862.8 109.4,868.0 111.6,872.5 113.7,880.0 115.9,884.5 118.0,879.2 120.2,880.5 122.4,878.9 124.5,882.6 126.7,880.1 128.9,881.7 131.0,883.6 133.2,884.3 135.4,879.8 137.5,883.7 139.7,880.8 141.9,880.9 144.0,884.0 146.2,877.1 148.4,880.5 150.5,883.9 152.7,883.4 154.8,881.3 157.0,882.5 159.2,882.4 161.3,879.1 163.5,879.9 165.7,880.6 167.8,878.9 170.0,883.2 172.2,880.2 174.3,885.3 176.5,881.4 178.7,883.7 180.8,883.3 183.0,884.4 185.2,883.2 187.3,883.1 189.5,875.9 191.6,877.2 193.8,882.2 196.0,880.2 198.1,874.9 200.3,864.5 202.5,877.2 204.6,882.8 206.8,881.3 209.0,860.5 211.1,877.7 213.3,876.7 215.5,879.8 217.6,866.8 219.8,877.4 222.0,879.5 224.1,874.4 226.3,881.9 228.4,878.9 230.6,881.7 232.8,881.7 234.9,881.6 237.1,880.2 239.3,879.3 241.4,884.3 243.6,878.8 245.8,880.6 247.9,882.5 250.1,882.6 252.3,866.8 254.4,875.2 256.6,863.4 258.8,871.0 260.9,873.4 263.1,871.8 265.2,869.1 267.4,882.1 269.6,879.3 271.7,876.7 273.9,868.0 276.1,880.8 278.2,872.7 280.4,864.5 282.6,866.8 284.7,878.2 286.9,880.3 289.1,877.7 291.2,872.0 293.4,879.4 295.6,882.2 297.7,872.7 299.9,879.6 302.0,880.7 304.2,880.9 306.4,872.0 308.5,874.8 310.7,878.7 312.9,878.7 315.0,881.2 317.2,881.3 319.4,881.8 321.5,881.0 323.7,859.9 325.9,877.5 328.0,881.0 330.2,879.0 332.4,872.0 334.5,880.0 336.7,882.5 338.8,882.4 341.0,879.8 343.2,884.6 345.3,882.1 347.5,883.7 349.7,882.8 351.8,882.6 354.0,882.2 356.2,880.8 358.3,879.4 360.5,877.3 362.7,883.0 364.8,882.4 367.0,883.0 369.2,878.5 371.3,882.5 373.5,883.7 375.6,878.6 377.8,881.3 380.0,878.9 382.1,881.5 384.3,881.5 386.5,853.1 388.6,741.0 390.8,864.5 393.0,883.8 395.1,884.4 397.3,846.2 399.5,881.2 401.6,883.6 403.8,880.4 405.9,883.3 408.1,878.5 410.3,884.6 412.4,874.8 414.6,879.3 416.8,882.9 418.9,883.2 421.1,879.2 423.3,881.8 425.4,878.2 427.6,863.9 429.8,865.7 431.9,881.0 434.1,878.7 436.3,861.7 438.4,839.9 440.6,879.2 442.7,880.6 444.9,884.2 447.1,884.1 449.2,881.0 451.4,879.9 453.6,881.7 455.7,882.6 457.9,883.2 460.1,881.9 462.2,881.2 464.4,884.5 466.6,883.5 468.7,884.3 470.9,878.6 473.1,879.4 475.2,884.0 477.4,879.8 479.5,881.7 481.7,883.7 483.9,864.5 486.0,822.2 488.2,828.5 490.4,884.1 492.5,879.8 494.7,878.6 496.9,884.3 499.0,882.4 501.2,882.7 503.4,870.8 505.5,885.2 507.7,883.6 509.9,879.9 512.0,879.2 514.2,881.2 516.3,883.0 518.5,884.3 520.7,885.0 522.8,883.4 525.0,882.1 527.2,884.3 529.3,877.9 531.5,883.3 533.7,885.0 535.8,880.6 538.0,884.2 540.2,884.7 542.3,885.5 544.5,882.9 546.7,879.3 548.8,884.6 551.0,883.3 553.1,876.0 555.3,883.5 557.5,884.0 559.6,880.2 561.8,883.2 564.0,881.6 566.1,881.0 568.3,885.2 570.5,885.0 572.6,885.6 574.8,883.6 577.0,883.0 579.1,882.1 581.3,883.6 583.5,883.6 585.6,883.3 587.8,884.7 589.9,884.9 592.1,878.0 594.3,868.0 596.4,866.8 598.6,869.1 600.8,878.4 602.9,882.8 605.1,880.8 607.3,881.9 609.4,885.8 611.6,882.4 613.8,883.9 615.9,880.5 618.1,883.8 620.3,885.7 622.4,883.1 624.6,883.3 626.7,883.9 628.9,883.9 631.1,881.4 633.2,885.6 635.4,880.8 637.6,881.9 639.7,880.7 641.9,882.1 644.1,882.1 646.2,879.7 648.4,880.5 650.6,884.5 652.7,881.3 654.9,883.9 657.1,883.8 659.2,881.3 661.4,885.4 663.5,883.3 665.7,873.1 667.9,885.0 670.0,883.6 672.2,882.5 674.4,881.5 676.5,883.1 678.7,882.6 680.9,881.9 683.0,881.6 685.2,880.8" fill="none" stroke="#1a6aab" stroke-width="1.65" stroke-linejoin="round"/>
</g>
<text x="763.2" y="662.8" textLength="30.5" lengthAdjust="spacingAndGlyphs">max a</text>
<rect x="761.1" y="667.3" width="55.3" height="24.4" fill="#f0f0f0"/>
<path d="M761.1 667.3H816.4L812.4 671.3H765.1V687.7L761.1 691.7Z" fill="#cecece"/>
<path d="M763.1 669.3H814.4L812.4 671.3H765.1V687.7L763.1 689.7Z" fill="#b9b9b9"/>
<rect x="765.1" y="671.3" width="47.3" height="16.4" fill="#d3d3d3"/>
<text x="768.0" y="684.0">4</text>
<text x="839.5" y="660.2" textLength="42.5" lengthAdjust="spacingAndGlyphs">Boolean</text>
<ellipse cx="861" cy="679" rx="22.9" ry="15" fill="url(#bring)"/>
<ellipse cx="861" cy="678.8" rx="21.1" ry="12.1" fill="#6b6b85"/>
<ellipse cx="866.6" cy="679.8" rx="15.6" ry="11" fill="#1e1e1e" opacity=".85"/>
<ellipse cx="865.7" cy="678.9" rx="15.7" ry="11" fill="url(#knob)"/>
<text x="907.4" y="662.8" textLength="33.5" lengthAdjust="spacingAndGlyphs">по об.</text>
<rect x="905.4" y="667.3" width="55.3" height="24.4" fill="#f0f0f0"/>
<path d="M905.4 667.3H960.7L956.7 671.3H909.4V687.7L905.4 691.7Z" fill="#cecece"/>
<path d="M907.4 669.3H958.7L956.7 671.3H909.4V687.7L907.4 689.7Z" fill="#b9b9b9"/>
<rect x="909.4" y="671.3" width="47.3" height="16.4" fill="#d3d3d3"/>
<text x="912.3" y="684.0">4</text>
<rect x="903.0" y="706.3" width="85.3" height="28.1" rx="4.5" fill="#000" opacity=".16" filter="url(#blur)"/>
<rect x="901.4" y="704.5" width="84.4" height="27.0" rx="3.5" fill="url(#g30)" stroke="#868686" stroke-width="1.3"/>
<rect x="902.6" y="705.8" width="82.0" height="24.6" rx="2.3" fill="none" stroke="#fff" stroke-width="1.1" opacity=".92"/>
<path d="M903.8 731.6H982.9Q985.9 731.6 985.9 728.6V706.9" fill="none" stroke="#6c6c6c" stroke-width="1.2" opacity=".75"/>
<rect x="913.0" y="711.0" width="18.9" height="16.0" fill="#d0d0d0"/>
<path d="M913.0 726.5H931.4V711.0" stroke="#8c8c8c" stroke-width="1" fill="none"/>
<path d="M913.5 726.0V711.5H930.9" stroke="#efefef" stroke-width="1" fill="none"/>
<rect x="914.8" y="713.6" width="2.9" height="2.9" fill="#2d6a1e"/>
<path d="M917.0 719.5H928.9M923.2 713.0V726.0" stroke="#000" stroke-width="1.3" fill="none"/>
<circle cx="923.2" cy="719.5" r="1.4" fill="#d0d0d0" stroke="#000" stroke-width=".8"/>
<rect x="933.5" y="711.0" width="18.9" height="16.0" fill="#747474"/>
<path d="M934.0 727.0V711.5H952.4" stroke="#4e4e4e" stroke-width="1" fill="none"/>
<rect x="935.3" y="713.6" width="2.9" height="2.9" fill="#3cff2a"/>
<path d="M936.3 725.0L942.0 720.6" stroke="#000" stroke-width="2.2" stroke-linecap="round"/>
<path d="M936.3 725.0L942.0 720.6" stroke="#ddd" stroke-width=".7" stroke-dasharray="1 1"/>
<circle cx="945.2" cy="717.2" r="3.9" fill="#e3e3ff" stroke="#000" stroke-width="1.1"/>
<path d="M942.9 717.2H947.5M945.2 714.9V719.5" stroke="#000" stroke-width="1.1"/>
<path d="M945.9 723.4h5l-2.5 2.8z" fill="#000"/>
<rect x="954.7" y="711.0" width="18.9" height="16.0" fill="#d0d0d0"/>
<path d="M954.7 726.5H973.1V711.0" stroke="#8c8c8c" stroke-width="1" fill="none"/>
<path d="M955.2 726.0V711.5H972.6" stroke="#efefef" stroke-width="1" fill="none"/>
<rect x="956.5" y="713.6" width="2.9" height="2.9" fill="#2d6a1e"/>
<path transform="translate(954.7 711.0)" d="M6.8 8.6V4Q7.7 2.8 8.6 4V8.6M8.6 4V3.2Q9.6 1.6 10.6 3.2V8.6M10.6 3.6Q11.5 2.4 12.4 3.6V8.4M12.4 5Q13.6 3.8 14.4 5.5Q14.7 6.2 14.7 7V10.4L12.5 13.6M6.8 9.4L5.4 7.5H3.7L6.6 13.6" fill="none" stroke="#000" stroke-width=".95"/>
<rect x="997.0" y="707.0" width="96.7" height="26.5" rx="4.5" fill="#000" opacity=".16" filter="url(#blur)"/>
<rect x="995.4" y="705.2" width="95.8" height="25.4" rx="3.5" fill="url(#g31)" stroke="#868686" stroke-width="1.3"/>
<rect x="996.6" y="706.4" width="93.4" height="23.0" rx="2.3" fill="none" stroke="#fff" stroke-width="1.1" opacity=".92"/>
<path d="M997.8 730.7H1088.3Q1091.2 730.7 1091.2 727.7V707.6" fill="none" stroke="#6c6c6c" stroke-width="1.2" opacity=".75"/>
<text x="1009.0" y="720.6" textLength="29.0" lengthAdjust="spacingAndGlyphs">Plot 0</text>
<rect x="1050.3" y="707.9" width="28.5" height="17.9" fill="#fff"/>
<path d="M1050.8 725.8V708.4H1078.8" stroke="#585858" stroke-width="1" fill="none"/>
<polyline points="1052.5,721.7 1062.9,711.1 1072.8,721.3 1077.1,716.9" fill="none" stroke="#1565a8" stroke-width="1.6"/>
<rect x="1050.5" y="720.1" width="4" height="4" fill="#fff" stroke="#1565a8" stroke-width="1"/>
<rect x="1052.0" y="721.6" width="1" height="1" fill="#1565a8"/>
<rect x="1060.9" y="709.5" width="4" height="4" fill="#fff" stroke="#1565a8" stroke-width="1"/>
<rect x="1062.4" y="711.0" width="1" height="1" fill="#1565a8"/>
<rect x="1070.8" y="719.7" width="4" height="4" fill="#fff" stroke="#1565a8" stroke-width="1"/>
<rect x="1072.3" y="721.2" width="1" height="1" fill="#1565a8"/>
<text x="739.4" y="729.7" textLength="117.5" lengthAdjust="spacingAndGlyphs">Amplitude spectrum 2</text>
<rect x="742.2" y="738.7" width="353.2" height="201.5" rx="4.5" fill="#000" opacity=".16" filter="url(#blur)"/>
<rect x="740.6" y="736.9" width="352.3" height="200.4" rx="3.5" fill="url(#g32)" stroke="#868686" stroke-width="1.3"/>
<rect x="741.9" y="738.1" width="349.9" height="198.0" rx="2.3" fill="none" stroke="#fff" stroke-width="1.1" opacity=".92"/>
<path d="M743.0 937.4H1090.0Q1092.9 937.4 1092.9 934.4V739.3" fill="none" stroke="#6c6c6c" stroke-width="1.2" opacity=".75"/>
<rect x="790.8" y="748.2" width="281.7" height="142.6" fill="#fff"/>
<path d="M791.9 748.2V890.8M797.8 748.2V890.8M803.7 748.2V890.8M809.5 748.2V890.8M815.4 748.2V890.8M821.3 748.2V890.8M827.2 748.2V890.8M833.1 748.2V890.8M838.9 748.2V890.8M844.8 748.2V890.8M850.7 748.2V890.8M856.6 748.2V890.8M862.5 748.2V890.8M868.3 748.2V890.8M874.2 748.2V890.8M880.1 748.2V890.8M886.0 748.2V890.8M891.9 748.2V890.8M897.7 748.2V890.8M903.6 748.2V890.8M909.5 748.2V890.8M915.4 748.2V890.8M921.3 748.2V890.8M927.1 748.2V890.8M933.0 748.2V890.8M938.9 748.2V890.8M944.8 748.2V890.8M950.7 748.2V890.8M956.5 748.2V890.8M962.4 748.2V890.8M968.3 748.2V890.8M974.2 748.2V890.8M980.1 748.2V890.8M985.9 748.2V890.8M991.8 748.2V890.8M997.7 748.2V890.8M1003.6 748.2V890.8M1009.5 748.2V890.8M1015.3 748.2V890.8M1021.2 748.2V890.8M1027.1 748.2V890.8M1033.0 748.2V890.8M1038.9 748.2V890.8M1044.7 748.2V890.8M1050.6 748.2V890.8M1056.5 748.2V890.8M1062.4 748.2V890.8M1068.3 748.2V890.8M790.8 889.3H1072.5M790.8 883.7H1072.5M790.8 878.1H1072.5M790.8 872.5H1072.5M790.8 866.9H1072.5M790.8 861.3H1072.5M790.8 855.7H1072.5M790.8 850.1H1072.5M790.8 844.5H1072.5M790.8 838.9H1072.5M790.8 833.3H1072.5M790.8 827.7H1072.5M790.8 822.1H1072.5M790.8 816.5H1072.5M790.8 810.9H1072.5M790.8 805.3H1072.5M790.8 799.7H1072.5M790.8 794.1H1072.5M790.8 788.5H1072.5M790.8 782.9H1072.5M790.8 777.3H1072.5M790.8 771.7H1072.5M790.8 766.1H1072.5M790.8 760.5H1072.5M790.8 754.9H1072.5M790.8 749.3H1072.5" stroke="#f2f2f2" stroke-width="1" fill="none" shape-rendering="crispEdges"/>
<path d="M791.9 748.2V890.8M821.3 748.2V890.8M850.7 748.2V890.8M880.1 748.2V890.8M909.5 748.2V890.8M938.9 748.2V890.8M968.3 748.2V890.8M997.7 748.2V890.8M1027.1 748.2V890.8M1056.5 748.2V890.8M790.8 749.3H1072.5M790.8 777.3H1072.5M790.8 805.3H1072.5M790.8 833.3H1072.5M790.8 861.3H1072.5M790.8 889.3H1072.5" stroke="#dedede" stroke-width="1" fill="none" shape-rendering="crispEdges"/>
<path d="M791.3 890.8V748.7H1072.5" stroke="#5a5a5a" stroke-width="1" fill="none"/>
<path d="M784.6 749.3H789.4M784.6 777.3H789.4M784.6 805.3H789.4M784.6 833.3H789.4M784.6 861.3H789.4M784.6 889.3H789.4M791.9 892.0V897.0M821.3 892.0V897.0M850.7 892.0V897.0M880.1 892.0V897.0M909.5 892.0V897.0M938.9 892.0V897.0M968.3 892.0V897.0M997.7 892.0V897.0M1027.1 892.0V897.0M1056.5 892.0V897.0M1071.2 892.0V897.0" stroke="#000" stroke-width="1" fill="none" shape-rendering="crispEdges"/>
<text x="781.2" y="753.7" text-anchor="end" textLength="11.2" lengthAdjust="spacingAndGlyphs">25</text>
<text x="781.2" y="781.7" text-anchor="end" textLength="11.2" lengthAdjust="spacingAndGlyphs">20</text>
<text x="781.2" y="809.7" text-anchor="end" textLength="11.2" lengthAdjust="spacingAndGlyphs">15</text>
<text x="781.2" y="837.7" text-anchor="end" textLength="11.2" lengthAdjust="spacingAndGlyphs">10</text>
<text x="781.2" y="865.7" text-anchor="end">5</text>
<text x="781.2" y="893.7" text-anchor="end">0</text>
<text x="791.1" y="908.3" text-anchor="middle">0</text>
<text x="820.5" y="908.3" text-anchor="middle" textLength="11.2" lengthAdjust="spacingAndGlyphs">10</text>
<text x="849.9" y="908.3" text-anchor="middle" textLength="11.2" lengthAdjust="spacingAndGlyphs">20</text>
<text x="879.3" y="908.3" text-anchor="middle" textLength="11.2" lengthAdjust="spacingAndGlyphs">30</text>
<text x="908.7" y="908.3" text-anchor="middle" textLength="11.2" lengthAdjust="spacingAndGlyphs">40</text>
<text x="938.1" y="908.3" text-anchor="middle" textLength="11.2" lengthAdjust="spacingAndGlyphs">50</text>
<text x="967.5" y="908.3" text-anchor="middle" textLength="11.2" lengthAdjust="spacingAndGlyphs">60</text>
<text x="996.9" y="908.3" text-anchor="middle" textLength="11.2" lengthAdjust="spacingAndGlyphs">70</text>
<text x="1026.3" y="908.3" text-anchor="middle" textLength="11.2" lengthAdjust="spacingAndGlyphs">80</text>
<text x="1055.7" y="908.3" text-anchor="middle" textLength="11.2" lengthAdjust="spacingAndGlyphs">90</text>
<text x="1070.4" y="908.3" text-anchor="middle" textLength="11.2" lengthAdjust="spacingAndGlyphs">95</text>
<text transform="translate(765.3 819.4) rotate(-90)" text-anchor="middle" textLength="54.0" lengthAdjust="spacingAndGlyphs">amplitude</text>
<text x="929.6" y="924.8" text-anchor="middle">Гц</text>
<polyline points="792.9,880.5 809.5,880.5 826.5,872.3 843.4,855.3 860.4,751.3 877.4,865.1 895.3,870.3 912.3,874.3 929.2,881.4 946.5,887.3 963.5,878.5 980.5,883.4 997.4,881.4 1014.4,887.3 1031.4,882.4 1048.3,882.4 1065.3,884.0" fill="none" stroke="#1a6aab" stroke-width="1.9" stroke-linejoin="round"/>
<rect x="791.1" y="878.7" width="3.6" height="3.6" fill="none" stroke="#1a6aab" stroke-width="1.1"/>
<rect x="807.7" y="878.7" width="3.6" height="3.6" fill="none" stroke="#1a6aab" stroke-width="1.1"/>
<rect x="824.7" y="870.5" width="3.6" height="3.6" fill="none" stroke="#1a6aab" stroke-width="1.1"/>
<rect x="841.6" y="853.5" width="3.6" height="3.6" fill="none" stroke="#1a6aab" stroke-width="1.1"/>
<rect x="858.6" y="749.5" width="3.6" height="3.6" fill="none" stroke="#1a6aab" stroke-width="1.1"/>
<rect x="875.6" y="863.3" width="3.6" height="3.6" fill="none" stroke="#1a6aab" stroke-width="1.1"/>
<rect x="893.5" y="868.5" width="3.6" height="3.6" fill="none" stroke="#1a6aab" stroke-width="1.1"/>
<rect x="910.5" y="872.5" width="3.6" height="3.6" fill="none" stroke="#1a6aab" stroke-width="1.1"/>
<rect x="927.4" y="879.6" width="3.6" height="3.6" fill="none" stroke="#1a6aab" stroke-width="1.1"/>
<rect x="944.7" y="885.5" width="3.6" height="3.6" fill="none" stroke="#1a6aab" stroke-width="1.1"/>
<rect x="961.7" y="876.7" width="3.6" height="3.6" fill="none" stroke="#1a6aab" stroke-width="1.1"/>
<rect x="978.7" y="881.6" width="3.6" height="3.6" fill="none" stroke="#1a6aab" stroke-width="1.1"/>
<rect x="995.6" y="879.6" width="3.6" height="3.6" fill="none" stroke="#1a6aab" stroke-width="1.1"/>
<rect x="1012.6" y="885.5" width="3.6" height="3.6" fill="none" stroke="#1a6aab" stroke-width="1.1"/>
<rect x="1029.6" y="880.6" width="3.6" height="3.6" fill="none" stroke="#1a6aab" stroke-width="1.1"/>
<rect x="1046.5" y="880.6" width="3.6" height="3.6" fill="none" stroke="#1a6aab" stroke-width="1.1"/>
<rect x="1063.5" y="882.2" width="3.6" height="3.6" fill="none" stroke="#1a6aab" stroke-width="1.1"/>
<rect x="0" y="0" width="1393" height="1" fill="#6b6b6b"/>
<rect x="1373" y="0" width="20" height="1" fill="#111"/>
<rect x="0" y="0" width="1.2" height="950" fill="#1a120c"/>
<rect x="1391" y="1" width="2" height="949" fill="#efefef"/>
<rect x="1392" y="30" width="1" height="896" fill="#8a8a8a"/>
<rect x="1.2" y="948" width="1392" height="2" fill="#efefef"/>
</svg>
</body></html>
